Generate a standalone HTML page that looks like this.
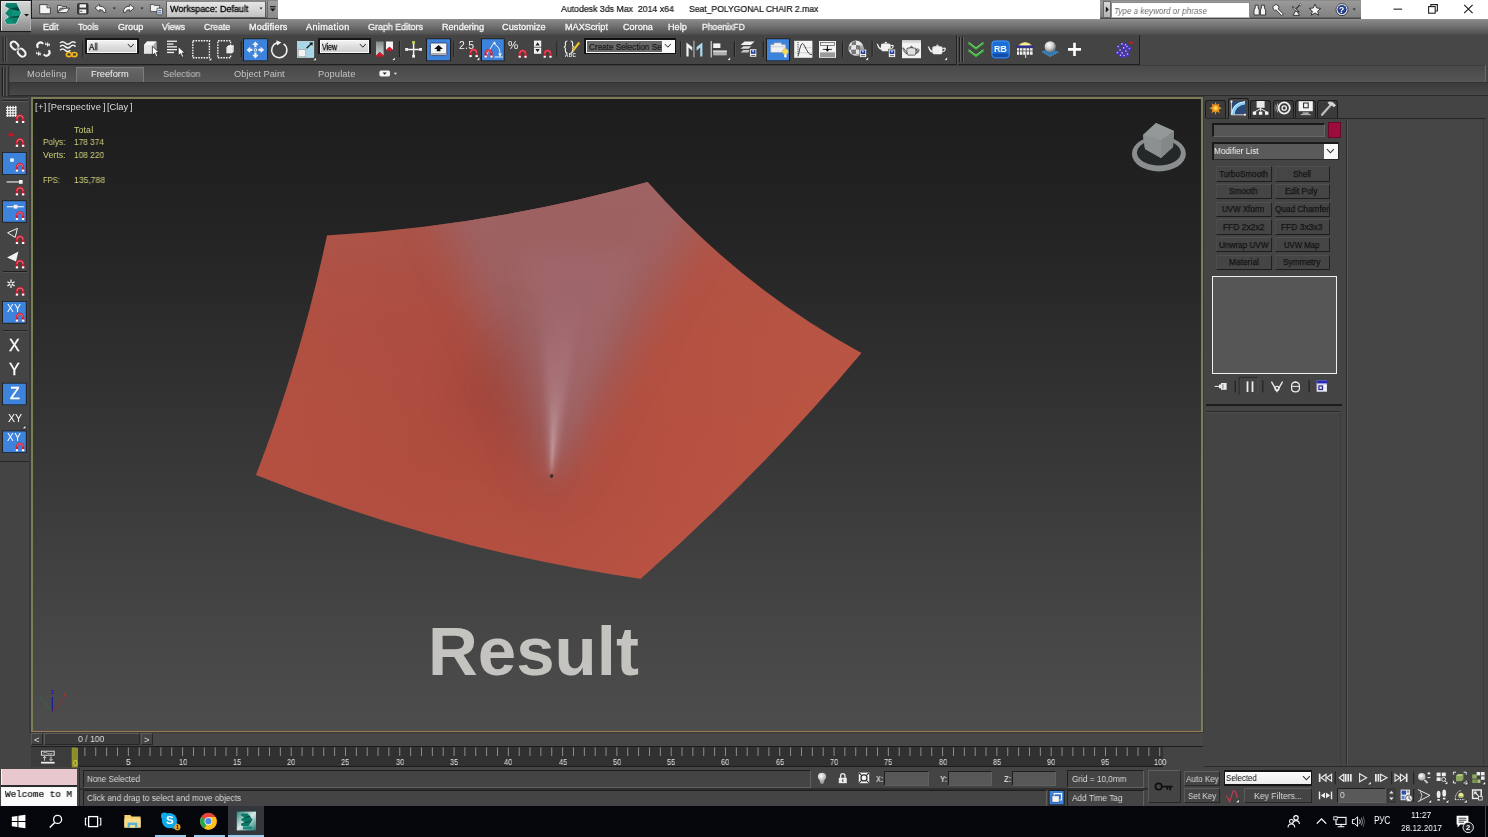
<!DOCTYPE html>
<html>
<head>
<meta charset="utf-8">
<title>Autodesk 3ds Max 2014 x64 - Seat_POLYGONAL CHAIR 2.max</title>
<style>
*{box-sizing:border-box;margin:0;padding:0}
html,body{width:1488px;height:837px;overflow:hidden;background:#444444}
body{position:relative;font-family:"Liberation Sans",sans-serif;font-size:9.5px;color:#e0e0e0;-webkit-font-smoothing:antialiased}
.abs{position:absolute}
svg{position:absolute;overflow:visible}
.t{position:absolute;white-space:nowrap;line-height:1;will-change:transform}
/* SECTION:CSS */
</style>
</head>
<body>
<!-- SECTION:TITLEBAR -->
<div class="abs" style="left:0px;top:0px;width:1488px;height:19px;background:#ffffff"></div>
<div class="abs" style="left:31px;top:0px;width:247px;height:19px;background:linear-gradient(#6a6a6a 0,#a2a2a2 1px,#979797 2px,#8a8a8a 9px,#7d7d7d 17px,#3c3c3c 18px,#3c3c3c 19px)"></div>
<div class="abs" style="left:0px;top:0px;width:32px;height:32px;background:#1c1c1c"></div>
<div class="abs" style="left:1px;top:1px;width:30px;height:30px;background:linear-gradient(#d4d4d4,#c0c0c0 40%,#a0a0a0 75%,#8c8c8c);border:1px solid #e8e8e8;border-right-color:#b0b0b0;border-bottom-color:#888"></div>
<svg style="left:0px;top:0px" width="32" height="32" viewBox="0 0 32 32">
<path d="M6.5 3.3 L16.3 3.3 L20.8 12.8 L15.9 23.4 L6.7 23.4 L5.1 19.9 L9.3 17.1 L5.3 13.2 L9.4 8.8 L5.1 6.1Z" fill="none" stroke="#d4f4ec" stroke-width="1.6" stroke-linejoin="round" opacity="0.8"/>
<path d="M6.5 3.3 L16.3 3.3 L20.8 12.8 L15.9 23.4 L6.7 23.4 L5.1 19.9 L9.3 17.1 L5.3 13.2 L9.4 8.8 L5.1 6.1Z" fill="#0f8a74"/>
<path d="M6.5 3.3 L16.3 3.3 L19.4 9.8 L9.4 8.8 L5.1 6.1Z" fill="#0b7a66"/>
<path d="M6.5 3.3 L16.3 3.3 L17.4 5.6 L6 5.4Z" fill="#0d826e"/>
<path d="M9.4 8.8 L19.4 9.8 L20.8 12.8 L19.4 15.8 L9.3 17.1 L5.3 13.2Z" fill="#11917a"/>
<path d="M12 9 L12 16.8 L9.3 17.1 L5.3 13.2 L9.4 8.8Z" fill="#0d8570"/>
<path d="M9.3 17.1 L19.4 15.8 L15.9 23.4 L6.7 23.4 L5.1 19.9Z" fill="#0c806b"/>
<path d="M6.7 23.4 L5.1 19.9 L7.4 18.4 L12.6 20.4 L12.6 23.4Z" fill="#11917a"/>
<path d="M9.4 8.8 L17.6 7 L19.4 9.8 L18.8 11 Z" fill="#05473d"/>
<path d="M9.3 17.1 L19.4 15.8 L18.6 17.6 L13 17.8Z" fill="#05473d"/>
<path d="M24 14 L29.1 14 L26.55 16.6Z" fill="#161616"/>
</svg>
<svg style="left:0px;top:0px" width="200" height="19" viewBox="0 0 200 19">
<g fill="#f4f4f4" stroke="#3a3a3a" stroke-width="0.9" stroke-linejoin="round">
<path d="M39.7 4.6 L47 4.6 L50.4 7.8 L50.4 13.8 L39.7 13.8Z"/>
<path d="M47 4.6 L47 7.8 L50.4 7.8" fill="#d0d0d0"/>
<path d="M57.6 12.6 L57.6 5.4 L61.3 5.4 L62.3 6.6 L66.5 6.6 L66.5 8.2 L60.2 8.2 L57.6 12.6 L66.6 12.6 L69.6 8.2 L66.5 8.2" />
<rect x="77.6" y="3.6" width="10.4" height="10.4" rx="1" fill="#3c3c3c" stroke="#2a2a2a"/>
</g>
<rect x="79.6" y="4.3" width="6.4" height="3.3" fill="#f2f2f2"/>
<rect x="79.4" y="9.4" width="6.8" height="3.9" fill="#f2f2f2"/>
<rect x="80.3" y="10.8" width="2" height="1" fill="#3c3c3c"/>
<g fill="#f4f4f4" stroke="#3a3a3a" stroke-width="0.9" stroke-linejoin="round">
<path d="M95 8 L99.6 4.2 L99.6 6.3 Q105.8 6 105.9 12.4 L103.6 12.4 Q103.4 9.4 99.6 9.7 L99.6 11.8Z"/>
<path d="M134.3 8 L129.7 4.2 L129.7 6.3 Q123.5 6 123.4 12.4 L125.7 12.4 Q125.9 9.4 129.7 9.7 L129.7 11.8Z"/>
</g>
<path d="M112.8 7.6 L115.8 7.6 L114.3 9.6Z" fill="#2a2a2a"/>
<path d="M140.4 7.6 L143.4 7.6 L141.9 9.6Z" fill="#2a2a2a"/>
<g fill="#f0f0f0" stroke="#3a3a3a" stroke-width="0.8" stroke-linejoin="round">
<path d="M150.4 11.6 L150.4 4.4 L153.6 4.4 L154.4 5.4 L159.6 5.4 L159.6 11.6Z"/>
<rect x="157" y="8.2" width="5.6" height="6.6" rx="0.8"/>
</g>
<rect x="158.2" y="10" width="3.2" height="1.2" fill="#4a6ab0"/>
<rect x="158.2" y="12.2" width="3.2" height="1.2" fill="#4a6ab0"/>
</svg>
<div class="abs" style="left:166px;top:1px;width:100px;height:17px;background:linear-gradient(#e6e6e6,#d2d2d2 60%,#c0c0c0);border:1px solid #5e5e5e;border-top-color:#888"></div>
<div class="t" style="left:170.0px;top:4.8px;font-size:9.2px;color:#000;transform:scaleX(0.979);transform-origin:0 0;-webkit-text-stroke:0.3px #000;">Workspace: Default</div>
<svg style="left:257px;top:6px" width="8" height="6" viewBox="0 0 8 6"><path d="M2.6 1.6 L5.4 1.6 L4 3.6Z" fill="#222"/></svg>
<div class="abs" style="left:267px;top:1px;width:11px;height:17px;background:linear-gradient(#a0a0a0,#8a8a8a);border-left:1px solid #6a6a6a"></div>
<svg style="left:267px;top:1px" width="11" height="17" viewBox="0 0 11 17"><rect x="3" y="5.2" width="5.6" height="1.1" fill="#111"/><path d="M3 7.4 L8.6 7.4 L5.8 10.6Z" fill="#111"/></svg>
<div class="t" style="left:561.3px;top:4.7px;font-size:9.2px;color:#111;transform:scaleX(0.952);transform-origin:0 0;-webkit-text-stroke:0.2px #111;">Autodesk 3ds Max &nbsp;2014 x64</div>
<div class="t" style="left:688.5px;top:4.7px;font-size:9.2px;color:#111;transform:scaleX(0.935);transform-origin:0 0;-webkit-text-stroke:0.2px #111;">Seat_POLYGONAL CHAIR 2.max</div>
<div class="abs" style="left:1100px;top:0px;width:261px;height:19px;background:linear-gradient(#7c7c7c 0,#9a9a9a 1px,#8e8e8e 9px,#828282 17px,#4a4a4a 18px)"></div>
<div class="abs" style="left:1103px;top:1px;width:8px;height:17px;background:linear-gradient(#d8d8d8,#b4b4b4);border:1px solid #6a6a6a"></div>
<svg style="left:1103px;top:1px" width="8" height="17" viewBox="0 0 8 17"><path d="M2.8 5.4 L5.8 8.5 L2.8 11.6Z" fill="#111"/></svg>
<div class="abs" style="left:1111px;top:2px;width:139px;height:16px;background:#fff;border:1px solid #8a8a8a;border-bottom-color:#b0b0b0"></div>
<div class="t" style="left:1113.8px;top:6.1px;font-size:9.4px;color:#6c6c6c;transform:scaleX(0.863);transform-origin:0 0;font-style:italic;">Type a keyword or phrase</div>
<svg style="left:0px;top:0px" width="1488" height="19" viewBox="0 0 1488 19">
<g fill="#f6f6f6" stroke="#2c2c2c" stroke-width="0.9" stroke-linejoin="round">
<path d="M1254 15 L1254 10 L1255.2 8 L1255.2 5.2 L1258.2 5.2 L1258.2 8 L1259.2 10 L1259.2 15Z"/>
<path d="M1260.4 15 L1260.4 10 L1261.4 8 L1261.4 5.2 L1264.4 5.2 L1264.4 8 L1265.6 10 L1265.6 15Z"/>
<path d="M1273.6 5.6 Q1276 3.4 1278.4 5.6 Q1279.6 7.4 1278.2 9 L1283.4 14 L1281.6 15.6 L1276.4 10.2 Q1274.4 10.8 1273.2 9 Q1272.4 7.2 1273.6 5.6Z"/>
<path d="M1292.4 6.4 Q1293.4 11.4 1299.4 11.8 Z"/>
<path d="M1293.2 15.4 L1295.4 11.2 L1297.2 11.6 L1299.4 15.4Z"/>
<path d="M1296.2 8.6 L1300 4.8" fill="none" stroke-width="1.2"/>
<path d="M1315 4.2 L1316.7 8 L1320.8 8.4 L1317.7 11.1 L1318.6 15.2 L1315 13 L1311.4 15.2 L1312.3 11.1 L1309.2 8.4 L1313.3 8Z"/>
</g>
<circle cx="1300.3" cy="4.6" r="1" fill="#f6f6f6" stroke="#2c2c2c" stroke-width="0.6"/>
<circle cx="1342" cy="9.6" r="6" fill="#f4f4f4" stroke="#333" stroke-width="0.9"/>
<circle cx="1342" cy="9.6" r="4.6" fill="#24408e"/>
<path d="M1352.6 8.6 L1355.6 8.6 L1354.1 10.4Z" fill="#222"/>
</svg>
<div class="t" style="left:1339.4px;top:5.6px;font-size:8.5px;color:#fff;font-weight:bold;">?</div>
<svg style="left:0px;top:0px" width="1488" height="19" viewBox="0 0 1488 19">
<rect x="1393.5" y="8.6" width="8.6" height="1.1" fill="#222"/>
<rect x="1428.6" y="6.6" width="6.6" height="6.6" fill="none" stroke="#222" stroke-width="1.1"/>
<path d="M1430.8 6.4 L1430.8 4.6 L1437.4 4.6 L1437.4 11 L1435.4 11" fill="none" stroke="#222" stroke-width="1.1"/>
<path d="M1464.2 4.8 L1472.6 13.2 M1472.6 4.8 L1464.2 13.2" stroke="#222" stroke-width="1.2" fill="none"/>
</svg>
<div class="abs" style="left:31px;top:19px;width:1457px;height:16px;background:linear-gradient(#929292 0,#848484 2px,#767676 6px,#646464 10px,#565656 14px,#4a4a4a 16px)"></div>
<div class="abs" style="left:0px;top:32px;width:31px;height:3px;background:#4a4a4a"></div>
<div class="t" style="left:42.6px;top:22.9px;font-size:9.1px;color:#f6f6f6;transform:scaleX(0.982);transform-origin:0 0;-webkit-text-stroke:0.3px #f6f6f6;">Edit</div>
<div class="t" style="left:77.5px;top:22.9px;font-size:9.1px;color:#f6f6f6;transform:scaleX(0.965);transform-origin:0 0;-webkit-text-stroke:0.3px #f6f6f6;">Tools</div>
<div class="t" style="left:117.9px;top:22.9px;font-size:9.1px;color:#f6f6f6;-webkit-text-stroke:0.3px #f6f6f6;">Group</div>
<div class="t" style="left:161.9px;top:22.9px;font-size:9.1px;color:#f6f6f6;transform:scaleX(0.958);transform-origin:0 0;-webkit-text-stroke:0.3px #f6f6f6;">Views</div>
<div class="t" style="left:203.9px;top:22.9px;font-size:9.1px;color:#f6f6f6;transform:scaleX(0.956);transform-origin:0 0;-webkit-text-stroke:0.3px #f6f6f6;">Create</div>
<div class="t" style="left:248.8px;top:22.9px;font-size:9.1px;color:#f6f6f6;letter-spacing:0.19px;-webkit-text-stroke:0.3px #f6f6f6;">Modifiers</div>
<div class="t" style="left:306.2px;top:22.9px;font-size:9.1px;color:#f6f6f6;letter-spacing:0.35px;-webkit-text-stroke:0.3px #f6f6f6;">Animation</div>
<div class="t" style="left:368.2px;top:22.9px;font-size:9.1px;color:#f6f6f6;transform:scaleX(0.981);transform-origin:0 0;-webkit-text-stroke:0.3px #f6f6f6;">Graph Editors</div>
<div class="t" style="left:441.6px;top:22.9px;font-size:9.1px;color:#f6f6f6;-webkit-text-stroke:0.3px #f6f6f6;">Rendering</div>
<div class="t" style="left:502.3px;top:22.9px;font-size:9.1px;color:#f6f6f6;letter-spacing:0.09px;-webkit-text-stroke:0.3px #f6f6f6;">Customize</div>
<div class="t" style="left:564.5px;top:22.9px;font-size:9.1px;color:#f6f6f6;-webkit-text-stroke:0.3px #f6f6f6;">MAXScript</div>
<div class="t" style="left:622.5px;top:22.9px;font-size:9.1px;color:#f6f6f6;-webkit-text-stroke:0.3px #f6f6f6;">Corona</div>
<div class="t" style="left:667.6px;top:22.9px;font-size:9.1px;color:#f6f6f6;letter-spacing:0.03px;-webkit-text-stroke:0.3px #f6f6f6;">Help</div>
<div class="t" style="left:701.6px;top:22.9px;font-size:9.1px;color:#f6f6f6;transform:scaleX(0.951);transform-origin:0 0;-webkit-text-stroke:0.3px #f6f6f6;">PhoenixFD</div>
<!-- END:TITLEBAR -->
<!-- SECTION:MENUBAR -->
<!-- SECTION:MAINTOOLBAR -->
<div class="abs" style="left:0px;top:35px;width:1140px;height:30px;background:#444444;border-bottom:1px solid #1f1f1f;border-right:1px solid #1f1f1f"></div>
<div class="abs" style="left:1140px;top:35px;width:348px;height:30px;background:#474747"></div>
<div class="abs" style="left:956px;top:35px;width:1px;height:30px;background:#222"></div>
<div class="abs" style="left:957px;top:35px;width:1px;height:30px;background:#585858"></div>
<svg style="left:0px;top:35px" width="1140" height="30" viewBox="0 35 1140 30"><rect x="2.6" y="37" width="1.2" height="25" fill="#1e1e1e"/><rect x="3.8" y="37" width="0.8" height="25" fill="#6a6a6a"/><rect x="5.2" y="37" width="1.2" height="25" fill="#1e1e1e"/><rect x="6.4" y="37" width="0.8" height="25" fill="#6a6a6a"/><rect x="959" y="37" width="1.2" height="25" fill="#1e1e1e"/><rect x="960.2" y="37" width="0.8" height="25" fill="#6a6a6a"/><rect x="961.8" y="37" width="1.2" height="25" fill="#1e1e1e"/><rect x="963" y="37" width="0.8" height="25" fill="#6a6a6a"/><g fill="none" stroke="#f2f2f2" stroke-width="2.3"><rect x="-3.2" y="-4.6" width="6.4" height="9.2" rx="3.2" transform="translate(14.6 45.6) rotate(-42)"/><rect x="-3.2" y="-4.6" width="6.4" height="9.2" rx="3.2" transform="translate(21.6 52.6) rotate(-42)"/></g><g fill="none" stroke="#333" stroke-width="0.6"><rect x="-4.5" y="-5.9" width="9" height="11.8" rx="4.4" transform="translate(14.6 45.6) rotate(-42)"/><rect x="-4.5" y="-5.9" width="9" height="11.8" rx="4.4" transform="translate(21.6 52.6) rotate(-42)"/></g><g fill="none" stroke="#f2f2f2" stroke-width="2.2" stroke-linecap="round"><path d="M37.6 47 A3.2 3.2 0 0 1 42.6 43.2"/><path d="M49.2 51 A3.2 3.2 0 0 1 44.4 55"/></g><g fill="#f2f2f2"><path d="M45.2 42.2l1.6 1.8l1-2.2l0.9 2.6l1.4-1.2l-0.6 3.4l-1.2-1.4l-0.8 1.8l-1-2.6l-1.4 0.8z"/><path d="M36.2 51.4l1.6 1.8l1-2.2l0.9 2.6l1.4-1.2l-0.6 3.4l-1.2-1.4l-0.8 1.8l-1-2.6l-1.4 0.8z"/></g><g fill="none" stroke="#f2f2f2" stroke-width="1.5"><path d="M60 43 Q62.6 40.4 65.2 43 T70.4 43 T75.6 43"/><path d="M60 46.6 Q62.6 44 65.2 46.6 T70.4 46.6 T75.6 46.6"/><path d="M60 50.2 Q62.6 47.6 65.2 50.2 T70.4 50.2"/></g><g fill="none" stroke="#f0b41e" stroke-width="1.7"><ellipse cx="69" cy="54.6" rx="2.6" ry="2.1"/><ellipse cx="74.4" cy="54.6" rx="2.6" ry="2.1"/></g><rect x="82.2" y="41" width="1.2" height="16" fill="#222"/><rect x="83.39999999999999" y="41" width="0.8" height="16" fill="#555"/><path d="M144 45 L147 41.4 L156.4 41.4 L156.4 50.6 L153.4 53.6 L144 53.6Z" fill="#dcdcdc"/><path d="M144 45 L147 41.4 L156.4 41.4 L153.4 45Z" fill="#f6f6f6"/><path d="M153.4 45 L156.4 41.4 L156.4 50.6 L153.4 53.6Z" fill="#a8a8a8"/><rect x="144" y="45" width="9.4" height="8.6" fill="#e4e4e4"/><path transform="translate(152.4 46.2) scale(1.05)" d="M0 0 L0 8.6 L2.1 6.7 L3.7 10.2 L5.3 9.5 L3.7 6.1 L6.4 6.1Z" fill="#fff" stroke="#1a1a1a" stroke-width="0.7"/><g fill="#f2f2f2"><rect x="167" y="40.6" width="10" height="1.3"/><rect x="167" y="43.4" width="6.4" height="1.3"/><rect x="167" y="46.2" width="10" height="1.3"/><rect x="167" y="49" width="10" height="1.3"/><rect x="167" y="51.8" width="7" height="1.3"/></g><path transform="translate(178.2 46.6) scale(1.05)" d="M0 0 L0 8.6 L2.1 6.7 L3.7 10.2 L5.3 9.5 L3.7 6.1 L6.4 6.1Z" fill="#fff" stroke="#1a1a1a" stroke-width="0.7"/><rect x="192.8" y="40.8" width="16.6" height="17" fill="none" stroke="#f2f2f2" stroke-width="1.4" stroke-dasharray="1.6 1.1"/><path d="M208.0 60.800000000000004 L211.79999999999998 57.0 L211.79999999999998 60.800000000000004Z" fill="#f8f8f8" stroke="#161616" stroke-width="0.6"/><path d="M230.6 46 L230.6 40.8 L217.8 40.8 L217.8 57.8 L230.6 57.8 L230.6 54.4" fill="none" stroke="#f2f2f2" stroke-width="1.4" stroke-dasharray="1.6 1.1"/><path d="M226.6 47.4 L228.2 45.6 L233.8 45.6 L233.8 51.4 L232.2 53.2 L226.6 53.2Z" fill="#d8d8d8"/><path d="M226.6 47.4 L228.2 45.6 L233.8 45.6 L232.2 47.4Z" fill="#f8f8f8"/><rect x="226.6" y="47.4" width="5.6" height="5.8" fill="#e8e8e8"/><rect x="240.70000000000002" y="41" width="1.2" height="16" fill="#222"/><rect x="241.9" y="41" width="0.8" height="16" fill="#555"/><rect x="243" y="38.4" width="24.6" height="22.8" fill="#1a1a1a"/><rect x="244" y="39.2" width="23" height="21.2" fill="#3d83db"/><g fill="#f2f2f2"><path d="M255.4 41.4 L258.6 45 L256.5 45 L256.5 47.2 L254.3 47.2 L254.3 45 L252.2 45Z"/><path d="M255.4 58.4 L258.6 54.8 L256.5 54.8 L256.5 52.6 L254.3 52.6 L254.3 54.8 L252.2 54.8Z"/><path d="M246.6 49.9 L250.2 46.7 L250.2 48.8 L252.4 48.8 L252.4 51 L250.2 51 L250.2 53.1Z"/><path d="M264.2 49.9 L260.6 46.7 L260.6 48.8 L258.4 48.8 L258.4 51 L260.6 51 L260.6 53.1Z"/><circle cx="255.4" cy="49.9" r="1.7"/></g><circle cx="255.4" cy="49.9" r="0.8" fill="#3d83db"/><path d="M283.6 43.8 A7.6 7.6 0 1 1 277 42.8" fill="none" stroke="#f2f2f2" stroke-width="1.5"/><path d="M276.4 40.2 L281.4 42.6 L277 45.6Z" fill="#f2f2f2"/><rect x="297.4" y="41.4" width="16.4" height="16" fill="#a8d8e8"/><rect x="297.4" y="41.4" width="16.4" height="16" fill="none" stroke="#d8f0f8" stroke-width="0.6"/><rect x="298.2" y="49.6" width="7.6" height="7.2" fill="#f4f4f4" stroke="#888" stroke-width="0.5"/><path d="M306.6 48.2 L311.6 43.4" stroke="#111" stroke-width="1.3"/><path d="M312.8 42.2 L312.4 45.8 L309.2 42.8Z" fill="#111"/><path d="M312.59999999999997 60.800000000000004 L316.4 57.0 L316.4 60.800000000000004Z" fill="#f8f8f8" stroke="#161616" stroke-width="0.6"/><defs><linearGradient id="pvg" x1="0" y1="0" x2="0" y2="1"><stop offset="0" stop-color="#8a8a8a"/><stop offset="1" stop-color="#c8d8d8"/></linearGradient></defs><path d="M376 41.6 L383.6 41.6 L383.6 55.4 L379.8 52 L376 55.4Z" fill="url(#pvg)"/><path d="M376 55.6 L379.8 52 L383.6 55.6 L381.4 57.6 L379.8 56 L378.2 57.6Z" fill="#d01828"/><path d="M386 41.6 L393 41.6 L393 50 L389.5 46.8 L386 50Z" fill="#f4f4f4"/><path d="M386 50 L389.5 46.8 L393 50 L391 51.6 L389.5 50.2 L388 51.6Z" fill="#d01828"/><path d="M391.4 60.6 L395.2 56.8 L395.2 60.6Z" fill="#f8f8f8" stroke="#161616" stroke-width="0.6"/><rect x="398.79999999999995" y="41" width="1.2" height="16" fill="#222"/><rect x="400.0" y="41" width="0.8" height="16" fill="#555"/><path d="M407 49.4 L420.6 49.4 M413.6 43 L413.6 55.6" stroke="#f2f2f2" stroke-width="1.5"/><rect x="412.2" y="41" width="2.8" height="2.8" fill="#b8d850"/><rect x="405.2" y="48" width="2.8" height="2.8" fill="#f2f2f2"/><rect x="419.2" y="48" width="2.8" height="2.8" fill="#f2f2f2"/><rect x="412.2" y="54.8" width="2.8" height="2.8" fill="#f2f2f2"/><rect x="426" y="38.4" width="25" height="22.8" fill="#1a1a1a"/><rect x="427" y="39.2" width="23" height="21.2" fill="#3d83db"/><rect x="430.4" y="43" width="16.4" height="12.6" rx="1.2" fill="#f4f4f4" stroke="#2a3a6a" stroke-width="0.8"/><rect x="431.2" y="53" width="14.8" height="2" fill="#b0b0b0"/><path d="M438.6 45 L443 49 L440.4 49 L440.4 51.2 L436.8 51.2 L436.8 49 L434.2 49Z" fill="#111"/><rect x="453.2" y="41" width="1.2" height="16" fill="#222"/><rect x="454.40000000000003" y="41" width="0.8" height="16" fill="#555"/><g transform="translate(469.4 48.6) scale(1.05)"><path d="M1.1 8 L1.1 3.8 A2.9 2.9 0 0 1 6.9 3.8 L6.9 8" fill="none" stroke="#d4182c" stroke-width="2.2"/><path d="M1.1 3.9 A2.9 2.9 0 0 1 6.9 3.9" fill="none" stroke="#f08a94" stroke-width="0.7"/><rect x="0" y="6.2" width="2.2" height="1.9" fill="#fff"/><rect x="5.8" y="6.2" width="2.2" height="1.9" fill="#fff"/></g><path d="M476.0 60.400000000000006 L479.8 56.6 L479.8 60.400000000000006Z" fill="#f8f8f8" stroke="#161616" stroke-width="0.6"/><rect x="481" y="38.4" width="23.6" height="22.8" fill="#1a1a1a"/><rect x="482" y="39.2" width="21.8" height="21.2" fill="#3d83db"/><path d="M486 55.6 L494.6 41.6 M494.6 57 L503 57" stroke="#f2f2f2" stroke-width="1" fill="none"/><path d="M494.6 44.4 Q500.4 47 500 55" stroke="#f2f2f2" stroke-width="1" fill="none"/><path d="M498.2 53.6 L501.8 53.6 L500 57Z" fill="#f2f2f2"/><circle cx="494.8" cy="43.2" r="1" fill="#f2f2f2"/><g transform="translate(484.6 49.4) scale(1.0)"><path d="M1.1 8 L1.1 3.8 A2.9 2.9 0 0 1 6.9 3.8 L6.9 8" fill="none" stroke="#d4182c" stroke-width="2.2"/><path d="M1.1 3.9 A2.9 2.9 0 0 1 6.9 3.9" fill="none" stroke="#f08a94" stroke-width="0.7"/><rect x="0" y="6.2" width="2.2" height="1.9" fill="#fff"/><rect x="5.8" y="6.2" width="2.2" height="1.9" fill="#fff"/></g><g transform="translate(518.6 49.6) scale(1.0)"><path d="M1.1 8 L1.1 3.8 A2.9 2.9 0 0 1 6.9 3.8 L6.9 8" fill="none" stroke="#d4182c" stroke-width="2.2"/><path d="M1.1 3.9 A2.9 2.9 0 0 1 6.9 3.9" fill="none" stroke="#f08a94" stroke-width="0.7"/><rect x="0" y="6.2" width="2.2" height="1.9" fill="#fff"/><rect x="5.8" y="6.2" width="2.2" height="1.9" fill="#fff"/></g><rect x="534" y="40.6" width="7.2" height="6.2" fill="#f2f2f2"/><rect x="534" y="47.6" width="7.2" height="6.2" fill="#f2f2f2"/><path d="M535.4 45.4 L539.8 45.4 L537.6 42.2Z" fill="#222"/><path d="M535.4 49 L539.8 49 L537.6 52.2Z" fill="#222"/><g transform="translate(543.6 49.6) scale(1.0)"><path d="M1.1 8 L1.1 3.8 A2.9 2.9 0 0 1 6.9 3.8 L6.9 8" fill="none" stroke="#d4182c" stroke-width="2.2"/><path d="M1.1 3.9 A2.9 2.9 0 0 1 6.9 3.9" fill="none" stroke="#f08a94" stroke-width="0.7"/><rect x="0" y="6.2" width="2.2" height="1.9" fill="#fff"/><rect x="5.8" y="6.2" width="2.2" height="1.9" fill="#fff"/></g><rect x="556.4" y="41" width="1.2" height="16" fill="#222"/><rect x="557.6" y="41" width="0.8" height="16" fill="#555"/><path d="M567.4 41 Q565.4 41 565.4 43 L565.4 45.4 Q565.4 46.8 563.8 47 Q565.4 47.2 565.4 48.6 L565.4 51 Q565.4 53 567.4 53" fill="none" stroke="#f2f2f2" stroke-width="1.1"/><path d="M570.6 41 Q572.6 41 572.6 43 L572.6 45.4 Q572.6 46.8 574.2 47 Q572.6 47.2 572.6 48.6 L572.6 51 Q572.6 53 570.6 53" fill="none" stroke="#f2f2f2" stroke-width="1.1"/><path d="M572.2 49.8 L578.4 41.8 L580.2 43.2 L574 51.2 L571.6 52Z" fill="#f0c838" stroke="#6a5a10" stroke-width="0.4"/><path d="M572.2 49.8 L574 51.2 L571.6 52Z" fill="#f4f4f4"/><rect x="680.0" y="41" width="1.2" height="16" fill="#222"/><rect x="681.2" y="41" width="0.8" height="16" fill="#555"/><path d="M686.4 42.4 L686.4 56.6 L688.6 56.6 L688.6 47.4 L692.2 50.8 L692.2 47 Z" fill="#f2f2f2"/><rect x="693.4" y="40.8" width="1.1" height="16.6" fill="#b8b8b8"/><path d="M702.4 42.4 L702.4 56.6 L700.2 56.6 L700.2 47.4 L696.6 50.8 L696.6 47 Z" fill="#a8dcf0"/><rect x="710.6" y="41" width="1.3" height="16.4" fill="#c8c8c8"/><rect x="713.2" y="43.4" width="7.2" height="4.6" fill="#f2f2f2"/><rect x="713.2" y="50.6" width="13.6" height="4.8" fill="#b0b0b0"/><rect x="713.2" y="50.6" width="13.6" height="1.4" fill="#dcdcdc"/><path d="M726.8 60.400000000000006 L730.6 56.6 L730.6 60.400000000000006Z" fill="#f8f8f8" stroke="#161616" stroke-width="0.6"/><rect x="733.8" y="41" width="1.2" height="16" fill="#222"/><rect x="735.0" y="41" width="0.8" height="16" fill="#555"/><g fill="#f2f2f2"><path d="M740.6 45 L744.4 41.4 L754.6 41.4 L750.8 45Z"/><path d="M740.6 48.8 L743.4 46.2 L751.4 46.2 L748.6 48.8Z" fill="#dcdcdc"/><path d="M740.6 52.6 L743.4 50 L750 50 L748.2 52.6Z" fill="#c8c8c8"/></g><rect x="749.8" y="49" width="6.8" height="8" fill="#f4f4f4" stroke="#3a3a3a" stroke-width="0.5"/><rect x="750.9" y="50.2" width="4.6" height="3.6" fill="#1e3ea0"/><rect x="752.4" y="50.2" width="1.4" height="2" fill="#dfe6ff"/><rect x="751.1999999999999" y="55" width="4" height="0.9" fill="#555"/><rect x="762.6999999999999" y="41" width="1.2" height="16" fill="#222"/><rect x="763.9" y="41" width="0.8" height="16" fill="#555"/><rect x="766" y="38.4" width="24" height="22.8" fill="#1a1a1a"/><rect x="767" y="39.2" width="22" height="21.2" fill="#3d83db"/><path d="M770.6 44.4 L774 44.4 L774 42.8 L781.6 42.8 L781.6 44.4 L785.6 44.4 L785.6 52.6 L770.6 52.6Z" fill="#f0f0f0" stroke="#7a8aa8" stroke-width="0.5"/><rect x="770.6" y="46.2" width="15" height="1" fill="#c8ccd8"/><circle cx="785.4" cy="51.6" r="2.9" fill="#f4dc5a" stroke="#c8a830" stroke-width="0.5"/><rect x="784.2" y="54.2" width="2.4" height="3.2" fill="#f4f4f4"/><rect x="794.2" y="40.8" width="18.2" height="17" fill="#f2f2f2"/><path d="M798 42 L798 57" stroke="#333" stroke-width="0.9" stroke-dasharray="1.2 1"/><path d="M794.6 52.8 L812 52.8 M803 47.6 L812 47.6" stroke="#bbb" stroke-width="0.6"/><path d="M798.4 55.4 Q801 40 803.8 44.6 Q806.6 50 808.4 53 Q810 55 812 54.6" fill="none" stroke="#333" stroke-width="0.9"/><rect x="819" y="41" width="17" height="16.8" fill="#f2f2f2"/><rect x="820.6" y="42.6" width="13.8" height="3" fill="none" stroke="#555" stroke-width="0.7"/><rect x="820" y="52.4" width="15" height="4.6" fill="#9a9a9a"/><path d="M827.4 45.6 L827.4 49.6" stroke="#111" stroke-width="1"/><path d="M825 49 L829.8 49 L827.4 51.8Z" fill="#111"/><path d="M822.8 49.4 L832 49.4" stroke="#111" stroke-width="0.8"/><rect x="842.0" y="41" width="1.2" height="16" fill="#222"/><rect x="843.2" y="41" width="0.8" height="16" fill="#555"/><circle cx="856" cy="48.2" r="7.6" fill="#e8e8e8"/><g fill="#7a7a7a"><path d="M852 41.8 L856 41 L856 45 L851.6 45.4Z"/><path d="M856 45 L860.4 45.4 L861 49.6 L856 49.4Z"/><path d="M851.6 45.4 L856 45 L856 49.4 L850.6 49.8 Z" fill="#e8e8e8"/><path d="M848.6 46.4 L851.6 45.4 L850.8 49.8 L848.4 50Z"/><path d="M850.8 49.8 L856 49.4 L856 54 L852 54.4Z"/><path d="M860.4 45.4 L862.6 45 L863.4 49 L861 49.6Z" fill="#b0b0b0"/><path d="M856 54 L860 54 L859 55.4 L856 55.8Z" fill="#b0b0b0"/></g><rect x="859.6" y="49.2" width="6.8" height="8" fill="#f4f4f4" stroke="#3a3a3a" stroke-width="0.5"/><rect x="860.7" y="50.400000000000006" width="4.6" height="3.6" fill="#1e3ea0"/><rect x="862.2" y="50.400000000000006" width="1.4" height="2" fill="#dfe6ff"/><rect x="861.0" y="55.2" width="4" height="0.9" fill="#555"/><path d="M864.8 60.400000000000006 L868.6 56.6 L868.6 60.400000000000006Z" fill="#f8f8f8" stroke="#161616" stroke-width="0.6"/><rect x="871.6" y="41" width="1.2" height="16" fill="#222"/><rect x="872.8000000000001" y="41" width="0.8" height="16" fill="#555"/><g transform="translate(885.8 46.2) scale(1.0)" fill="#f0f0f0" stroke="none" stroke-width="0.7"><path d="M-4.6 -2.2 Q-5.6 4.6 -3.4 5 L3.4 5 Q5.6 4.6 4.6 -2.2 Q0 -3.6 -4.6 -2.2Z"/><path d="M-1.4 -3.2 Q0 -5.6 1.4 -3.2Z"/><path d="M-4.8 1.8 Q-7 0.8 -7.8 -2.2 L-9.2 -2.6 L-8.6 -1 Q-7.6 2.8 -4.6 3.6Z"/><path d="M4.8 -1 Q8.4 -2.6 8 0.6 Q7.4 2.8 4.6 3.2 L4.8 2.2 Q6.6 1.8 6.9 0.4 Q7 -0.8 4.8 0Z"/></g><rect x="888.6" y="49.2" width="6.8" height="8" fill="#f4f4f4" stroke="#3a3a3a" stroke-width="0.5"/><rect x="889.7" y="50.400000000000006" width="4.6" height="3.6" fill="#1e3ea0"/><rect x="891.2" y="50.400000000000006" width="1.4" height="2" fill="#dfe6ff"/><rect x="890.0" y="55.2" width="4" height="0.9" fill="#555"/><rect x="902" y="40.4" width="19" height="17.8" fill="#f2f2f2"/><rect x="902" y="40.4" width="19" height="2.6" fill="#d8d8d8"/><g transform="translate(911.4 50.4) scale(0.95)" fill="#e0e0e0" stroke="#222" stroke-width="0.7"><path d="M-4.6 -2.2 Q-5.6 4.6 -3.4 5 L3.4 5 Q5.6 4.6 4.6 -2.2 Q0 -3.6 -4.6 -2.2Z"/><path d="M-1.4 -3.2 Q0 -5.6 1.4 -3.2Z"/><path d="M-4.8 1.8 Q-7 0.8 -7.8 -2.2 L-9.2 -2.6 L-8.6 -1 Q-7.6 2.8 -4.6 3.6Z"/><path d="M4.8 -1 Q8.4 -2.6 8 0.6 Q7.4 2.8 4.6 3.2 L4.8 2.2 Q6.6 1.8 6.9 0.4 Q7 -0.8 4.8 0Z"/></g><g transform="translate(937.4 49) scale(1.05)" fill="#f0f0f0" stroke="none" stroke-width="0.7"><path d="M-4.6 -2.2 Q-5.6 4.6 -3.4 5 L3.4 5 Q5.6 4.6 4.6 -2.2 Q0 -3.6 -4.6 -2.2Z"/><path d="M-1.4 -3.2 Q0 -5.6 1.4 -3.2Z"/><path d="M-4.8 1.8 Q-7 0.8 -7.8 -2.2 L-9.2 -2.6 L-8.6 -1 Q-7.6 2.8 -4.6 3.6Z"/><path d="M4.8 -1 Q8.4 -2.6 8 0.6 Q7.4 2.8 4.6 3.2 L4.8 2.2 Q6.6 1.8 6.9 0.4 Q7 -0.8 4.8 0Z"/></g><path d="M943.8 60.400000000000006 L947.6 56.6 L947.6 60.400000000000006Z" fill="#f8f8f8" stroke="#161616" stroke-width="0.6"/><g fill="none" stroke="#3cb43c" stroke-width="2.1" stroke-linejoin="miter"><path d="M968.6 43 L976 48.6 L983.4 43"/><path d="M968.6 50.4 L976 56 L983.4 50.4"/></g><g fill="none" stroke="#8ae08a" stroke-width="0.7"><path d="M968.6 42.2 L976 47.8 L983.4 42.2"/><path d="M968.6 49.6 L976 55.2 L983.4 49.6"/></g><rect x="991.4" y="40.4" width="18.4" height="18" rx="3.6" fill="#1c6ed8"/><rect x="991.4" y="53.6" width="18.4" height="4.8" rx="2.4" fill="#124ea8"/><rect x="992" y="41" width="17.2" height="16.8" rx="3.2" fill="none" stroke="#5aa0f0" stroke-width="0.7"/><path d="M1018 45.6 Q1025 38.6 1032.4 45.6Z" fill="#e8e070"/><path d="M1019.6 45.6 Q1025 41.6 1030.6 45.6Z" fill="#f8f4b8"/><rect x="1016.4" y="45.6" width="17.6" height="2" fill="#2c2ca0"/><g fill="#f0f0f0"><rect x="1017" y="48.2" width="2" height="6.6"/><rect x="1019.8" y="48.2" width="2.6" height="6.6"/><rect x="1023.2" y="48.2" width="2.6" height="6.6"/><rect x="1026.6" y="48.2" width="2.6" height="6.6"/><rect x="1030" y="48.2" width="2.6" height="6.6"/></g><rect x="1016.4" y="50.6" width="17.6" height="0.8" fill="#444"/><rect x="1025" y="55" width="1.2" height="3" fill="#c8c8c8"/><defs><radialGradient id="sph" cx="0.4" cy="0.32" r="0.7"><stop offset="0" stop-color="#ffffff"/><stop offset="0.5" stop-color="#d0d0d0"/><stop offset="1" stop-color="#6a6a6a"/></radialGradient></defs><path d="M1042 51.6 L1050 56.6 L1058.6 52 L1053 49 L1047 49Z" fill="#2e7ab8"/><path d="M1042 51.6 L1050 56.6 L1058.6 52" fill="none" stroke="#6ab4e8" stroke-width="0.8" stroke-dasharray="1.5 1"/><circle cx="1050.2" cy="46.8" r="5.6" fill="url(#sph)"/><path d="M1068 49.4 L1081 49.4 M1074.5 42.8 L1074.5 56" stroke="#fff" stroke-width="2.6"/><circle cx="1118.6" cy="47" r="1.9" fill="#4a32c8"/><circle cx="1118.1" cy="46.5" r="0.8" fill="#c8c0ff"/><circle cx="1122.4" cy="44.4" r="1.9" fill="#4a32c8"/><circle cx="1121.9" cy="43.9" r="0.8" fill="#c8c0ff"/><circle cx="1126" cy="45.2" r="1.9" fill="#4a32c8"/><circle cx="1125.5" cy="44.7" r="0.8" fill="#c8c0ff"/><circle cx="1124.2" cy="48.4" r="1.9" fill="#4a32c8"/><circle cx="1123.7" cy="47.9" r="0.8" fill="#c8c0ff"/><circle cx="1120.6" cy="50.6" r="1.9" fill="#4a32c8"/><circle cx="1120.1" cy="50.1" r="0.8" fill="#c8c0ff"/><circle cx="1117.8" cy="53" r="1.9" fill="#4a32c8"/><circle cx="1117.3" cy="52.5" r="0.8" fill="#c8c0ff"/><circle cx="1122.6" cy="53.4" r="1.9" fill="#4a32c8"/><circle cx="1122.1" cy="52.9" r="0.8" fill="#c8c0ff"/><circle cx="1126.4" cy="51.6" r="1.9" fill="#4a32c8"/><circle cx="1125.9" cy="51.1" r="0.8" fill="#c8c0ff"/><circle cx="1129.6" cy="49" r="1.9" fill="#4a32c8"/><circle cx="1129.1" cy="48.5" r="0.8" fill="#c8c0ff"/><circle cx="1128" cy="54.6" r="1.9" fill="#4a32c8"/><circle cx="1127.5" cy="54.1" r="0.8" fill="#c8c0ff"/><circle cx="1124.6" cy="56" r="1.9" fill="#4a32c8"/><circle cx="1124.1" cy="55.5" r="0.8" fill="#c8c0ff"/><circle cx="1121" cy="55.8" r="1.9" fill="#4a32c8"/><circle cx="1120.5" cy="55.3" r="0.8" fill="#c8c0ff"/><circle cx="1127.4" cy="47" r="1.9" fill="#4a32c8"/><circle cx="1126.9" cy="46.5" r="0.8" fill="#c8c0ff"/><circle cx="1131.4" cy="42.8" r="1.4" fill="#e01818"/></svg>
<div class="t" style="left:458.8px;top:40.7px;font-size:10.4px;color:#f4f4f4;letter-spacing:0.27px;">2.5</div>
<div class="t" style="left:508.4px;top:39.8px;font-size:11.5px;color:#f4f4f4;">%</div>
<div class="t" style="left:564.6px;top:54.3px;font-size:4.6px;color:#f4f4f4;letter-spacing:0.42px;font-weight:bold;">ABC</div>
<div class="t" style="left:994.4px;top:44.3px;font-size:9.6px;color:#ffffff;transform:scaleX(0.923);transform-origin:0 0;font-weight:bold;">RB</div>
<div class="abs" style="left:85px;top:38px;width:53.8px;height:16.4px;background:#161616"></div><div class="abs" style="left:86.6px;top:39.6px;width:50.599999999999994px;height:13.2px;background:linear-gradient(#f2f2f2,#dedede 50%,#cfcfcf);border:1px solid #fafafa"></div><div class="t" style="left:88.6px;top:41.7px;font-size:9.6px;color:#0a0a0a;transform:scaleX(0.825);transform-origin:0 0;-webkit-text-stroke:0.3px #0a0a0a;">All</div><svg style="left:127.4px;top:43.2px" width="8" height="6" viewBox="0 0 8 6"><path d="M0.8 1 L3.8 4.2 L6.8 1" fill="none" stroke="#222" stroke-width="1"/></svg>
<div class="abs" style="left:318px;top:38px;width:52.8px;height:16.4px;background:#161616"></div><div class="abs" style="left:319.6px;top:39.6px;width:49.599999999999994px;height:13.2px;background:linear-gradient(#f2f2f2,#dedede 50%,#cfcfcf);border:1px solid #fafafa"></div><div class="t" style="left:321.6px;top:41.7px;font-size:9.6px;color:#0a0a0a;transform:scaleX(0.727);transform-origin:0 0;-webkit-text-stroke:0.3px #0a0a0a;">View</div><svg style="left:359.40000000000003px;top:43.2px" width="8" height="6" viewBox="0 0 8 6"><path d="M0.8 1 L3.8 4.2 L6.8 1" fill="none" stroke="#222" stroke-width="1"/></svg>
<div class="abs" style="left:584.2px;top:38px;width:92.2px;height:16.4px;background:#101010"></div>
<div class="abs" style="left:585.8px;top:39.6px;width:89px;height:13.2px;background:#fafafa"></div>
<div class="abs" style="left:587px;top:40.8px;width:75.2px;height:10.8px;background:#6a6a6a"></div>
<div class="t" style="left:588.6px;top:41.8px;font-size:9.4px;color:#161616;transform:scaleX(0.871);transform-origin:0 0;-webkit-text-stroke:0.2px #161616;">Create Selection Se</div>
<svg style="left:664.4px;top:43.2px" width="8" height="6" viewBox="0 0 8 6"><path d="M0.8 1 L3.8 4.2 L6.8 1" fill="none" stroke="#222" stroke-width="1"/></svg>
<!-- END:MAINTOOLBAR -->
<!-- SECTION:RIBBON -->
<div class="abs" style="left:0px;top:65px;width:1486px;height:17px;background:linear-gradient(#2e2e2e 0,#4a4a4a 1px,#4c4c4c 30%,#565656 100%);border-right:1px solid #6a6a6a"></div>
<div class="abs" style="left:0px;top:82px;width:1488px;height:14px;background:linear-gradient(#3a3a3a,#404040 40%,#494949);border-top:1px solid #343434;border-bottom:1px solid #2c2c2c"></div>
<div class="abs" style="left:0px;top:65px;width:9px;height:32px;background:#444"></div>
<svg style="left:0px;top:65px" width="10" height="32" viewBox="0 0 10 32"><rect x="1.8" y="2" width="1.2" height="29" fill="#1e1e1e"/><rect x="3" y="2" width="0.8" height="29" fill="#666"/><rect x="4.6" y="2" width="1.2" height="29" fill="#1e1e1e"/><rect x="5.8" y="2" width="0.8" height="29" fill="#666"/><rect x="8.2" y="1" width="1" height="31" fill="#2a2a2a"/></svg>
<div class="abs" style="left:75.6px;top:67.4px;width:68.8px;height:14.6px;background:linear-gradient(#676767,#5a5a5a);border:1px solid #7c7c7c;border-bottom:none;border-radius:1px 1px 0 0"></div>
<div class="t" style="left:27.0px;top:69.9px;font-size:9.3px;color:#c4c4c4;letter-spacing:0.25px;">Modeling</div>
<div class="t" style="left:91.2px;top:69.9px;font-size:9.3px;color:#f4f4f4;">Freeform</div>
<div class="t" style="left:162.5px;top:69.9px;font-size:9.3px;color:#c4c4c4;transform:scaleX(0.980);transform-origin:0 0;">Selection</div>
<div class="t" style="left:234.2px;top:69.9px;font-size:9.3px;color:#c4c4c4;">Object Paint</div>
<div class="t" style="left:318.0px;top:69.9px;font-size:9.3px;color:#c4c4c4;letter-spacing:0.11px;">Populate</div>
<svg style="left:378px;top:69px" width="24" height="10" viewBox="0 0 24 10"><rect x="1.4" y="1.6" width="10.6" height="5.8" rx="1.6" fill="#f4f4f4"/><path d="M4.6 3.4 L8.8 3.4 L6.7 5.8Z" fill="#222"/><path d="M15.8 3.8 L19 3.8 L17.4 5.8Z" fill="#eee"/></svg>
<!-- END:RIBBON -->
<!-- SECTION:LEFTBAR -->
<div class="abs" style="left:0px;top:96px;width:30px;height:366px;background:#444;border-right:1px solid #262626;border-bottom:1px solid #262626"></div>
<svg style="left:0px;top:96px" width="30" height="366" viewBox="0 96 30 366"><rect x="2" y="96.6" width="26" height="1.1" fill="#1e1e1e"/><rect x="2" y="97.7" width="26" height="0.8" fill="#666"/><rect x="2" y="99.8" width="26" height="1.1" fill="#1e1e1e"/><rect x="2" y="100.9" width="26" height="0.8" fill="#666"/><rect x="7.0" y="105.8" width="1.2" height="11" fill="#f2f2f2"/><rect x="6" y="107.0" width="10.6" height="1.2" fill="#f2f2f2"/><rect x="9.7" y="105.8" width="1.2" height="11" fill="#f2f2f2"/><rect x="6" y="109.7" width="10.6" height="1.2" fill="#f2f2f2"/><rect x="12.4" y="105.8" width="1.2" height="11" fill="#f2f2f2"/><rect x="6" y="112.4" width="10.6" height="1.2" fill="#f2f2f2"/><rect x="15.100000000000001" y="105.8" width="1.2" height="11" fill="#f2f2f2"/><rect x="6" y="115.1" width="10.6" height="1.2" fill="#f2f2f2"/><g transform="translate(15.8 114.4) scale(1.06)"><path d="M1.1 8 L1.1 3.8 A2.9 2.9 0 0 1 6.9 3.8 L6.9 8" fill="none" stroke="#d4182c" stroke-width="2.2"/><path d="M1.1 3.9 A2.9 2.9 0 0 1 6.9 3.9" fill="none" stroke="#f08a94" stroke-width="0.7"/><rect x="0" y="6.2" width="2.2" height="1.9" fill="#fff"/><rect x="5.8" y="6.2" width="2.2" height="1.9" fill="#fff"/></g><path d="M11.2 130.6 L12.2 133.8 L15.4 134.8 L12.2 135.8 L11.2 139 L10.2 135.8 L7 134.8 L10.2 133.8Z" fill="#d01020"/><g transform="translate(15.8 138.2) scale(1.06)"><path d="M1.1 8 L1.1 3.8 A2.9 2.9 0 0 1 6.9 3.8 L6.9 8" fill="none" stroke="#d4182c" stroke-width="2.2"/><path d="M1.1 3.9 A2.9 2.9 0 0 1 6.9 3.9" fill="none" stroke="#f08a94" stroke-width="0.7"/><rect x="0" y="6.2" width="2.2" height="1.9" fill="#fff"/><rect x="5.8" y="6.2" width="2.2" height="1.9" fill="#fff"/></g><rect x="2.2" y="152" width="24.4" height="23" fill="#1a1a1a"/><rect x="3" y="152.8" width="22.8" height="21.4" fill="#3d83db"/><rect x="10.2" y="158.4" width="3.6" height="3.4" fill="#f2f2f2"/><g transform="translate(15.8 163) scale(1.06)"><path d="M1.1 8 L1.1 3.8 A2.9 2.9 0 0 1 6.9 3.8 L6.9 8" fill="none" stroke="#d4182c" stroke-width="2.2"/><path d="M1.1 3.9 A2.9 2.9 0 0 1 6.9 3.9" fill="none" stroke="#f08a94" stroke-width="0.7"/><rect x="0" y="6.2" width="2.2" height="1.9" fill="#fff"/><rect x="5.8" y="6.2" width="2.2" height="1.9" fill="#fff"/></g><rect x="6.6" y="181.4" width="13" height="1.1" fill="#f2f2f2"/><rect x="19" y="180" width="3.6" height="3.8" fill="#f2f2f2"/><g transform="translate(15.8 186.8) scale(1.06)"><path d="M1.1 8 L1.1 3.8 A2.9 2.9 0 0 1 6.9 3.8 L6.9 8" fill="none" stroke="#d4182c" stroke-width="2.2"/><path d="M1.1 3.9 A2.9 2.9 0 0 1 6.9 3.9" fill="none" stroke="#f08a94" stroke-width="0.7"/><rect x="0" y="6.2" width="2.2" height="1.9" fill="#fff"/><rect x="5.8" y="6.2" width="2.2" height="1.9" fill="#fff"/></g><rect x="2.2" y="200.4" width="24.4" height="22.2" fill="#1a1a1a"/><rect x="3" y="201.20000000000002" width="22.8" height="20.599999999999998" fill="#3d83db"/><rect x="6.8" y="206.2" width="17" height="1.1" fill="#f2f2f2"/><rect x="13.8" y="204.8" width="3.6" height="3.8" fill="#f2f2f2"/><g transform="translate(15.8 211.4) scale(1.06)"><path d="M1.1 8 L1.1 3.8 A2.9 2.9 0 0 1 6.9 3.8 L6.9 8" fill="none" stroke="#d4182c" stroke-width="2.2"/><path d="M1.1 3.9 A2.9 2.9 0 0 1 6.9 3.9" fill="none" stroke="#f08a94" stroke-width="0.7"/><rect x="0" y="6.2" width="2.2" height="1.9" fill="#fff"/><rect x="5.8" y="6.2" width="2.2" height="1.9" fill="#fff"/></g><path d="M7.6 232.8 L17.4 228.4 L15.2 237.4Z" fill="none" stroke="#f2f2f2" stroke-width="1"/><g transform="translate(15.8 235.4) scale(1.06)"><path d="M1.1 8 L1.1 3.8 A2.9 2.9 0 0 1 6.9 3.8 L6.9 8" fill="none" stroke="#d4182c" stroke-width="2.2"/><path d="M1.1 3.9 A2.9 2.9 0 0 1 6.9 3.9" fill="none" stroke="#f08a94" stroke-width="0.7"/><rect x="0" y="6.2" width="2.2" height="1.9" fill="#fff"/><rect x="5.8" y="6.2" width="2.2" height="1.9" fill="#fff"/></g><path d="M7 257.6 L18.4 251.6 L16 261.6Z" fill="#f2f2f2"/><g transform="translate(15.8 259.8) scale(1.06)"><path d="M1.1 8 L1.1 3.8 A2.9 2.9 0 0 1 6.9 3.8 L6.9 8" fill="none" stroke="#d4182c" stroke-width="2.2"/><path d="M1.1 3.9 A2.9 2.9 0 0 1 6.9 3.9" fill="none" stroke="#f08a94" stroke-width="0.7"/><rect x="0" y="6.2" width="2.2" height="1.9" fill="#fff"/><rect x="5.8" y="6.2" width="2.2" height="1.9" fill="#fff"/></g><rect x="3" y="271" width="24" height="1.1" fill="#1e1e1e"/><rect x="3" y="272.1" width="24" height="0.8" fill="#5a5a5a"/><g stroke="#f2f2f2" stroke-width="1.3"><path d="M11 279.6 L11 288 M7.4 281.7 L14.6 285.9 M14.6 281.7 L7.4 285.9"/></g><circle cx="11" cy="283.8" r="1.1" fill="#444"/><g transform="translate(15.8 287) scale(1.06)"><path d="M1.1 8 L1.1 3.8 A2.9 2.9 0 0 1 6.9 3.8 L6.9 8" fill="none" stroke="#d4182c" stroke-width="2.2"/><path d="M1.1 3.9 A2.9 2.9 0 0 1 6.9 3.9" fill="none" stroke="#f08a94" stroke-width="0.7"/><rect x="0" y="6.2" width="2.2" height="1.9" fill="#fff"/><rect x="5.8" y="6.2" width="2.2" height="1.9" fill="#fff"/></g><rect x="2.2" y="301" width="24.4" height="22.6" fill="#1a1a1a"/><rect x="3" y="301.8" width="22.8" height="21.0" fill="#3d83db"/><g transform="translate(15.8 313) scale(1.06)"><path d="M1.1 8 L1.1 3.8 A2.9 2.9 0 0 1 6.9 3.8 L6.9 8" fill="none" stroke="#d4182c" stroke-width="2.2"/><path d="M1.1 3.9 A2.9 2.9 0 0 1 6.9 3.9" fill="none" stroke="#f08a94" stroke-width="0.7"/><rect x="0" y="6.2" width="2.2" height="1.9" fill="#fff"/><rect x="5.8" y="6.2" width="2.2" height="1.9" fill="#fff"/></g><rect x="3" y="330.2" width="24" height="1.1" fill="#1e1e1e"/><rect x="3" y="331.3" width="24" height="0.8" fill="#5a5a5a"/><rect x="2.2" y="382.8" width="24.4" height="22.4" fill="#1a1a1a"/><rect x="3" y="383.6" width="22.8" height="20.799999999999997" fill="#3d83db"/><path d="M22.0 428.8 L25.8 425.0 L25.8 428.8Z" fill="#f8f8f8" stroke="#161616" stroke-width="0.6"/><rect x="2.2" y="430.6" width="24.4" height="22.4" fill="#1a1a1a"/><rect x="3" y="431.40000000000003" width="22.8" height="20.799999999999997" fill="#3d83db"/><g transform="translate(15.8 442.6) scale(1.06)"><path d="M1.1 8 L1.1 3.8 A2.9 2.9 0 0 1 6.9 3.8 L6.9 8" fill="none" stroke="#d4182c" stroke-width="2.2"/><path d="M1.1 3.9 A2.9 2.9 0 0 1 6.9 3.9" fill="none" stroke="#f08a94" stroke-width="0.7"/><rect x="0" y="6.2" width="2.2" height="1.9" fill="#fff"/><rect x="5.8" y="6.2" width="2.2" height="1.9" fill="#fff"/></g></svg>
<div class="t" style="left:6.6px;top:303.5px;font-size:10px;color:#fff;letter-spacing:0.46px;">XY</div>
<div class="t" style="left:9.2px;top:338.0px;font-size:16px;color:#fff;-webkit-text-stroke:0.3px #fff;">X</div>
<div class="t" style="left:9.2px;top:361.8px;font-size:16px;color:#fff;-webkit-text-stroke:0.3px #fff;">Y</div>
<div class="t" style="left:9.6px;top:386.2px;font-size:16px;color:#fff;-webkit-text-stroke:0.3px #fff;">Z</div>
<div class="t" style="left:7.6px;top:413.0px;font-size:10.6px;color:#fff;">XY</div>
<div class="t" style="left:6.6px;top:432.9px;font-size:10px;color:#fff;letter-spacing:0.46px;">XY</div>
<!-- END:LEFTBAR -->
<!-- SECTION:VIEWPORT -->
<div class="abs" style="left:29px;top:96px;width:1176px;height:637px;background:#3a3a34"></div>
<div class="abs" id="vp" style="left:31px;top:97px;width:1172px;height:635px;border:2px solid #7c7c58;border-bottom:1.6px solid #9a7e58;background:linear-gradient(#1d1d1d 0%,#232323 20%,#2e2e2e 40%,#393939 60%,#444444 80%,#4d4d4d 100%);overflow:hidden">
<svg width="1168" height="631" viewBox="33 99 1168 631" style="left:0;top:0">
<defs>
<linearGradient id="pg1" gradientUnits="userSpaceOnUse" x1="256" y1="400" x2="862" y2="400">
<stop offset="0" stop-color="#b55040"/><stop offset="0.25" stop-color="#af4c3e"/><stop offset="0.5" stop-color="#ac4b3e"/><stop offset="0.68" stop-color="#b65040"/><stop offset="1" stop-color="#bd5643"/>
</linearGradient>
<linearGradient id="pg3" gradientUnits="userSpaceOnUse" x1="500" y1="180" x2="520" y2="580">
<stop offset="0" stop-color="#a86058" stop-opacity="0.55"/><stop offset="0.35" stop-color="#a4524a" stop-opacity="0.2"/><stop offset="0.7" stop-color="#b45244" stop-opacity="0.15"/><stop offset="1" stop-color="#bc5646" stop-opacity="0.5"/>
</linearGradient>
<linearGradient id="cone" gradientUnits="userSpaceOnUse" x1="552" y1="478" x2="562" y2="290">
<stop offset="0" stop-color="#c8a0a4" stop-opacity="0.95"/><stop offset="0.3" stop-color="#b48488" stop-opacity="0.8"/><stop offset="0.7" stop-color="#a87478" stop-opacity="0.5"/><stop offset="1" stop-color="#a07074" stop-opacity="0"/>
</linearGradient>
<linearGradient id="cone2" gradientUnits="userSpaceOnUse" x1="552" y1="478" x2="556" y2="390">
<stop offset="0" stop-color="#d8b8bc" stop-opacity="0.9"/><stop offset="0.5" stop-color="#c09a9e" stop-opacity="0.5"/><stop offset="1" stop-color="#b08a8e" stop-opacity="0"/>
</linearGradient>
<filter id="b1" x="-50%" y="-50%" width="200%" height="200%"><feGaussianBlur stdDeviation="1"/></filter>
<filter id="b3" x="-50%" y="-50%" width="200%" height="200%"><feGaussianBlur stdDeviation="3.5"/></filter>
<filter id="b8" x="-50%" y="-50%" width="200%" height="200%"><feGaussianBlur stdDeviation="10"/></filter>
<filter id="b14" x="-50%" y="-50%" width="200%" height="200%"><feGaussianBlur stdDeviation="20"/></filter>
<clipPath id="pclip"><path d="M647.6 182 Q490.5 226 327 235.6 Q301.2 358 256 475 Q442 550 640.6 578.8 Q759.6 474.2 861.4 353 Q739.5 286.5 647.6 182Z"/></clipPath>
</defs>
<path d="M647.6 182 Q490.5 226 327 235.6 Q301.2 358 256 475 Q442 550 640.6 578.8 Q759.6 474.2 861.4 353 Q739.5 286.5 647.6 182Z" fill="url(#pg1)"/>
<g clip-path="url(#pclip)">
<rect x="250" y="175" width="620" height="410" fill="url(#pg3)"/>
<path d="M552 495 L415 150 L735 150 Z" fill="#9a666a" filter="url(#b14)" opacity="0.78"/>
<path d="M552 482 L520 250 L640 250 Z" fill="#a06c72" filter="url(#b8)" opacity="0.5"/>
<path d="M545 482 L450 400 L510 310 Z" fill="#8a3730" filter="url(#b14)" opacity="0.3"/>
<path d="M551.5 478 L541 300 L581 300 Z" fill="url(#cone)" filter="url(#b3)"/>
<path d="M551.5 477 L550.5 390 L559.5 390 Z" fill="url(#cone2)" filter="url(#b1)"/>
</g>
<path d="M549.4 476.4 l2.4 -2.6 l1.8 1.6 l-1.6 2.8z" fill="#3a2a2a"/>
<!-- axis tripod -->
<g stroke-width="1.2" fill="none">
<path d="M52.3 711.4 L52.3 697" stroke="#1a1a9c"/>
<path d="M52.6 711 L65.6 696.4" stroke="#9a2c2c" opacity="0.55"/>
<path d="M52 711 L39.6 696.6" stroke="#2a7a3a" opacity="0.45"/>
</g>
</svg>
<!-- viewcube -->
<svg width="70" height="60" viewBox="1125 118 70 60" style="left:1092px;top:19px">
<ellipse cx="1158.9" cy="153.8" rx="27" ry="17.6" fill="#8b8e8e"/>
<ellipse cx="1158.9" cy="152.6" rx="22" ry="13" fill="#25282a"/>
<path d="M1156 123 L1174 131 L1173 147 L1161 158 L1145 149 L1143 135 Z" fill="#8f9292"/>
<path d="M1156 123 L1174 131 L1161 140 L1143 135 Z" fill="#959898"/>
<path d="M1161 140 L1174 131 L1173 147 L1161 158 Z" fill="#858888"/>
<path d="M1143 135 L1161 140 L1161 158 L1145 149 Z" fill="#8d9090"/>
</svg>
</div>
<div class="t" style="left:34.8px;top:102.6px;font-size:9.3px;color:#dcdcdc;letter-spacing:0.40px;">[+]</div>
<div class="t" style="left:48.4px;top:102.6px;font-size:9.3px;color:#dcdcdc;letter-spacing:0.15px;">[Perspective</div>
<div class="t" style="left:102.6px;top:102.6px;font-size:9.3px;color:#dcdcdc;">]</div>
<div class="t" style="left:107.4px;top:102.6px;font-size:9.3px;color:#dcdcdc;">[Clay</div>
<div class="t" style="left:130.0px;top:102.6px;font-size:9.3px;color:#dcdcdc;">]</div>
<div class="t" style="left:74.1px;top:125.9px;font-size:8.8px;color:#d0d07a;letter-spacing:0.13px;">Total</div>
<div class="t" style="left:42.5px;top:138.3px;font-size:8.8px;color:#d0d07a;transform:scaleX(0.939);transform-origin:0 0;">Polys:</div>
<div class="t" style="left:74.1px;top:138.3px;font-size:8.8px;color:#d0d07a;transform:scaleX(0.940);transform-origin:0 0;">178 374</div>
<div class="t" style="left:42.5px;top:150.7px;font-size:8.8px;color:#d0d07a;">Verts:</div>
<div class="t" style="left:74.1px;top:150.7px;font-size:8.8px;color:#d0d07a;transform:scaleX(0.946);transform-origin:0 0;">108 220</div>
<div class="t" style="left:42.5px;top:175.8px;font-size:8.8px;color:#d0d07a;transform:scaleX(0.859);transform-origin:0 0;">FPS:</div>
<div class="t" style="left:74.1px;top:175.8px;font-size:8.8px;color:#d0d07a;transform:scaleX(0.978);transform-origin:0 0;">135,788</div>
<div class="t" style="left:428.2px;top:616.8px;font-size:69px;color:#c4c3c0;font-weight:bold;">Result</div>
<div class="t" style="left:50.8px;top:689.2px;font-size:6.5px;color:#2222b8;font-weight:bold;">z</div>
<div class="t" style="left:63.4px;top:692.2px;font-size:6.5px;color:#a83030;font-weight:bold;">x</div>
<!-- END:VIEWPORT -->
<!-- SECTION:CMDPANEL -->
<div class="abs" style="left:1204px;top:96px;width:284px;height:710px;background:#444"></div>
<div class="abs" style="left:1346px;top:118px;width:1px;height:648px;background:#2e2e2e"></div>
<div class="abs" style="left:1347px;top:118px;width:1px;height:648px;background:#565656"></div>
<div class="abs" style="left:1348px;top:118px;width:136px;height:1.4px;background:#262626"></div>
<div class="abs" style="left:1349px;top:119.4px;width:134px;height:646px;background:#454545"></div>
<div class="abs" style="left:1483px;top:118px;width:1px;height:648px;background:#3a3a3a"></div>
<div class="abs" style="left:1206px;top:118px;width:280px;height:1.2px;background:#262626"></div>
<div class="abs" style="left:1204.8px;top:99.6px;width:21.600000000000136px;height:18.8px;background:#3b3b3b;border:1px solid #1c1c1c;border-bottom:none;border-radius:3px 3px 0 0"></div>
<div class="abs" style="left:1227.8px;top:98.2px;width:20.799999999999955px;height:21px;background:#474747;border:1px solid #1c1c1c;border-bottom:none;border-radius:3px 3px 0 0"></div>
<div class="abs" style="left:1250px;top:99.6px;width:21.200000000000045px;height:18.8px;background:#3b3b3b;border:1px solid #1c1c1c;border-bottom:none;border-radius:3px 3px 0 0"></div>
<div class="abs" style="left:1272.6px;top:99.6px;width:21.200000000000045px;height:18.8px;background:#3b3b3b;border:1px solid #1c1c1c;border-bottom:none;border-radius:3px 3px 0 0"></div>
<div class="abs" style="left:1295px;top:99.6px;width:21px;height:18.8px;background:#3b3b3b;border:1px solid #1c1c1c;border-bottom:none;border-radius:3px 3px 0 0"></div>
<div class="abs" style="left:1317.2px;top:99.6px;width:21.200000000000045px;height:18.8px;background:#3b3b3b;border:1px solid #1c1c1c;border-bottom:none;border-radius:3px 3px 0 0"></div>
<svg style="left:1204px;top:96px" width="140" height="24" viewBox="1204 96 140 24"><defs><radialGradient id="sun"><stop offset="0" stop-color="#fff27a"/><stop offset="0.5" stop-color="#f8b830"/><stop offset="1" stop-color="#d87818"/></radialGradient></defs><path d="M1215.6 101.8 L1216.6 105 L1219.6 103.4 L1218.6 106.6 L1221.8 108.2 L1218.6 109.8 L1219.8 113 L1216.6 111.6 L1215.6 115 L1214.6 111.6 L1211.4 113 L1212.6 109.8 L1209.4 108.2 L1212.6 106.6 L1211.6 103.4 L1214.6 105Z" fill="#e89828"/><circle cx="1215.6" cy="108.2" r="3.9" fill="url(#sun)"/><rect x="1231.2" y="101.4" width="13.8" height="13.2" fill="#2c4a78"/><path d="M1231.6 114.6 Q1232 103 1245 101.6 L1245 104.6 Q1235.6 105.8 1234.6 114.6Z" fill="#8ad0f4"/><path d="M1231.6 114.6 Q1232 103 1245 101.6" fill="none" stroke="#e8f8ff" stroke-width="0.9"/><path d="M1231.4 101.4 L1231.4 114.8 L1245 114.8" fill="none" stroke="#f0f0f0" stroke-width="0.8"/><rect x="1230.6" y="100.6" width="1.8" height="1.8" fill="#fff"/><rect x="1244" y="113.8" width="1.8" height="1.8" fill="#fff"/><rect x="1256.6" y="101" width="8" height="6.8" fill="#e8e8e8"/><path d="M1260.6 107.8 L1260.6 111 M1260.6 108.6 L1254.4 112 M1260.6 108.6 L1266.8 112" stroke="#f0f0f0" stroke-width="1" fill="none"/><rect x="1252.8" y="111.6" width="3.4" height="3.2" fill="#f4f4f4"/><rect x="1258.9" y="111.6" width="3.4" height="3.2" fill="#f4f4f4"/><rect x="1265" y="111.6" width="3.4" height="3.2" fill="#f4f4f4"/><circle cx="1284.2" cy="108" r="5.6" fill="none" stroke="#f0f0f0" stroke-width="1.8"/><circle cx="1284.2" cy="108" r="2.2" fill="none" stroke="#f0f0f0" stroke-width="1.3"/><path d="M1277.8 103.6 Q1275.6 108 1277.8 112.4" fill="none" stroke="#b8b8b8" stroke-width="0.9"/><path d="M1275.6 104.6 Q1274.2 108 1275.6 111.4" fill="none" stroke="#8a8a8a" stroke-width="0.7"/><rect x="1298.6" y="101.2" width="14.2" height="10" fill="#f2f2f2"/><rect x="1303.6" y="103" width="4.6" height="4.8" fill="none" stroke="#222" stroke-width="1"/><rect x="1302.6" y="112.6" width="6.2" height="1" fill="#f2f2f2"/><rect x="1300.6" y="114.2" width="10.2" height="0.9" fill="#c8c8c8"/><path d="M1322 114.8 L1331.4 104.2" stroke="#c0c0c0" stroke-width="2.2" stroke-linecap="round"/><path d="M1328 102.4 Q1332.6 100.6 1335.6 105.6 L1333.4 106.8 Q1332.4 104.4 1329.6 104.6Z" fill="#d8d8d8" stroke="#d8d8d8" stroke-width="0.8"/></svg>
<div class="abs" style="left:1211.6px;top:122.6px;width:113px;height:14.8px;background:#565656;border:2px solid #1a1a1a;border-right:1px solid #666;border-bottom:1px solid #666"></div>
<div class="abs" style="left:1328px;top:122.2px;width:12.6px;height:15.4px;background:#9c0c3c;border:1px solid #6a0828"></div>
<div class="abs" style="left:1211.6px;top:142px;width:127px;height:17.8px;background:#5a5a5a;border:2px solid #1a1a1a;border-right:1px solid #2a2a2a;border-bottom:1px solid #2a2a2a"></div>
<div class="abs" style="left:1324px;top:143.6px;width:13.6px;height:15.2px;background:#fafafa"></div>
<svg style="left:1326.4px;top:148px" width="10" height="7" viewBox="0 0 10 7"><path d="M1 1.2 L4.4 4.8 L7.8 1.2" fill="none" stroke="#333" stroke-width="1.1"/></svg>
<div class="t" style="left:1214.0px;top:146.8px;font-size:9.2px;color:#f6f6f6;transform:scaleX(0.899);transform-origin:0 0;">Modifier List</div>
<div class="abs" style="left:1216.4px;top:166.2px;width:55.2px;height:15.4px;background:#454545;border:1px solid #2a2a2a;border-top-color:#505050;border-left-color:#4c4c4c;border-right-color:#202020;border-bottom-color:#1c1c1c"></div>
<div class="t" style="left:1219.0px;top:169.7px;font-size:8.8px;color:#141414;transform:scaleX(0.925);transform-origin:0 0;-webkit-text-stroke:0.25px #141414;">TurboSmooth</div>
<div class="abs" style="left:1274.6px;top:166.2px;width:55.2px;height:15.4px;background:#454545;border:1px solid #2a2a2a;border-top-color:#505050;border-left-color:#4c4c4c;border-right-color:#202020;border-bottom-color:#1c1c1c"></div>
<div class="t" style="left:1292.6px;top:169.7px;font-size:8.8px;color:#141414;transform:scaleX(0.920);transform-origin:0 0;-webkit-text-stroke:0.25px #141414;">Shell</div>
<div class="abs" style="left:1216.4px;top:183.89999999999998px;width:55.2px;height:15.4px;background:#454545;border:1px solid #2a2a2a;border-top-color:#505050;border-left-color:#4c4c4c;border-right-color:#202020;border-bottom-color:#1c1c1c"></div>
<div class="t" style="left:1229.4px;top:187.4px;font-size:8.8px;color:#141414;transform:scaleX(0.943);transform-origin:0 0;-webkit-text-stroke:0.25px #141414;">Smooth</div>
<div class="abs" style="left:1274.6px;top:183.89999999999998px;width:55.2px;height:15.4px;background:#454545;border:1px solid #2a2a2a;border-top-color:#505050;border-left-color:#4c4c4c;border-right-color:#202020;border-bottom-color:#1c1c1c"></div>
<div class="t" style="left:1285.0px;top:187.4px;font-size:8.8px;color:#141414;transform:scaleX(0.939);transform-origin:0 0;-webkit-text-stroke:0.25px #141414;">Edit Poly</div>
<div class="abs" style="left:1216.4px;top:201.6px;width:55.2px;height:15.4px;background:#454545;border:1px solid #2a2a2a;border-top-color:#505050;border-left-color:#4c4c4c;border-right-color:#202020;border-bottom-color:#1c1c1c"></div>
<div class="t" style="left:1222.4px;top:205.1px;font-size:8.8px;color:#141414;transform:scaleX(0.909);transform-origin:0 0;-webkit-text-stroke:0.25px #141414;">UVW Xform</div>
<div class="abs" style="left:1274.6px;top:201.6px;width:55.2px;height:15.4px;background:#454545;border:1px solid #2a2a2a;border-top-color:#505050;border-left-color:#4c4c4c;border-right-color:#202020;border-bottom-color:#1c1c1c"></div>
<div class="t" style="left:1275.0px;top:205.1px;font-size:8.8px;color:#141414;transform:scaleX(0.936);transform-origin:0 0;-webkit-text-stroke:0.25px #141414;">Quad Chamfer</div>
<div class="abs" style="left:1216.4px;top:219.29999999999998px;width:55.2px;height:15.4px;background:#454545;border:1px solid #2a2a2a;border-top-color:#505050;border-left-color:#4c4c4c;border-right-color:#202020;border-bottom-color:#1c1c1c"></div>
<div class="t" style="left:1223.0px;top:222.8px;font-size:8.8px;color:#141414;transform:scaleX(0.962);transform-origin:0 0;-webkit-text-stroke:0.25px #141414;">FFD 2x2x2</div>
<div class="abs" style="left:1274.6px;top:219.29999999999998px;width:55.2px;height:15.4px;background:#454545;border:1px solid #2a2a2a;border-top-color:#505050;border-left-color:#4c4c4c;border-right-color:#202020;border-bottom-color:#1c1c1c"></div>
<div class="t" style="left:1281.4px;top:222.8px;font-size:8.8px;color:#141414;transform:scaleX(0.962);transform-origin:0 0;-webkit-text-stroke:0.25px #141414;">FFD 3x3x3</div>
<div class="abs" style="left:1216.4px;top:237.0px;width:55.2px;height:15.4px;background:#454545;border:1px solid #2a2a2a;border-top-color:#505050;border-left-color:#4c4c4c;border-right-color:#202020;border-bottom-color:#1c1c1c"></div>
<div class="t" style="left:1218.6px;top:240.5px;font-size:8.8px;color:#141414;transform:scaleX(0.931);transform-origin:0 0;-webkit-text-stroke:0.25px #141414;">Unwrap UVW</div>
<div class="abs" style="left:1274.6px;top:237.0px;width:55.2px;height:15.4px;background:#454545;border:1px solid #2a2a2a;border-top-color:#505050;border-left-color:#4c4c4c;border-right-color:#202020;border-bottom-color:#1c1c1c"></div>
<div class="t" style="left:1284.0px;top:240.5px;font-size:8.8px;color:#141414;transform:scaleX(0.883);transform-origin:0 0;-webkit-text-stroke:0.25px #141414;">UVW Map</div>
<div class="abs" style="left:1216.4px;top:254.7px;width:55.2px;height:15.4px;background:#454545;border:1px solid #2a2a2a;border-top-color:#505050;border-left-color:#4c4c4c;border-right-color:#202020;border-bottom-color:#1c1c1c"></div>
<div class="t" style="left:1228.6px;top:258.2px;font-size:8.8px;color:#141414;transform:scaleX(0.959);transform-origin:0 0;-webkit-text-stroke:0.25px #141414;">Material</div>
<div class="abs" style="left:1274.6px;top:254.7px;width:55.2px;height:15.4px;background:#454545;border:1px solid #2a2a2a;border-top-color:#505050;border-left-color:#4c4c4c;border-right-color:#202020;border-bottom-color:#1c1c1c"></div>
<div class="t" style="left:1283.0px;top:258.2px;font-size:8.8px;color:#141414;transform:scaleX(0.944);transform-origin:0 0;-webkit-text-stroke:0.25px #141414;">Symmetry</div>
<div class="abs" style="left:1211.6px;top:276.2px;width:125.2px;height:98px;background:#565656;border:1.3px solid #f0f0f0"></div>
<svg style="left:1204px;top:376px" width="140" height="20" viewBox="1204 376 140 20"><path d="M1214.6 386.4 L1219 386.4" stroke="#ececec" stroke-width="1"/><path d="M1219 384.6 L1221 384.6 L1221 383 L1226.6 383 L1226.6 389.8 L1221 389.8 L1221 388.2 L1219 388.2Z" fill="#ececec"/><rect x="1222.4" y="384.2" width="1" height="4.4" fill="#777"/><rect x="1234.6" y="380.4" width="1.2" height="12" fill="#222"/><rect x="1262.2" y="380.4" width="1.2" height="12" fill="#222"/><rect x="1308.6" y="380.4" width="1.2" height="12" fill="#222"/><path d="M1239.2 394.6 L1239.2 377.4 L1258 377.4" fill="none" stroke="#2a2a2a" stroke-width="1"/><path d="M1258 377.4 L1258 394.6" fill="none" stroke="#525252" stroke-width="0.8"/><rect x="1246.6" y="381.4" width="1.8" height="10.6" fill="#ececec"/><rect x="1251.6" y="381.4" width="1.8" height="10.6" fill="#ececec"/><path d="M1271.4 381.6 L1277 391.4 L1282.6 381.6" fill="none" stroke="#ececec" stroke-width="1.3"/><circle cx="1277" cy="388.4" r="2" fill="none" stroke="#ececec" stroke-width="1.1"/><path d="M1291.6 386 Q1291.6 382.4 1295.4 382.2 Q1299.4 382.4 1299.4 386 L1299.4 388.6 Q1299.2 391.8 1295.4 391.8 Q1291.8 391.8 1291.6 388.6Z" fill="none" stroke="#ececec" stroke-width="1.2"/><path d="M1292 386.4 L1299 386.4" stroke="#ececec" stroke-width="1"/><path d="M1294 382.6 Q1295.4 380.6 1297 382.6" fill="none" stroke="#ececec" stroke-width="0.9"/><rect x="1316.6" y="380.4" width="10.4" height="11.4" fill="#d8d8e8"/><rect x="1316.6" y="380.4" width="10.4" height="3" fill="#2a2ab8"/><rect x="1318.4" y="385.4" width="4.6" height="4.6" fill="#2a2a8a"/><rect x="1319.6" y="386.6" width="2.2" height="2.2" fill="#f4f4f4"/><rect x="1324" y="385.4" width="2.4" height="1.8" fill="#fff"/><rect x="1324" y="388.6" width="2.4" height="1.8" fill="#fff"/></svg>
<div class="abs" style="left:1206.2px;top:404.4px;width:136px;height:1.6px;background:#1c1c1c"></div>
<div class="abs" style="left:1206.2px;top:411.2px;width:134px;height:1.2px;background:#2a2a2a"></div>
<div class="abs" style="left:1206.2px;top:412.4px;width:134px;height:0.8px;background:#4e4e4e"></div>
<div class="abs" style="left:1340.2px;top:412px;width:0.9px;height:354px;background:#3c3c3c"></div>
<!-- END:CMDPANEL -->
<!-- SECTION:TIMELINE -->
<div class="abs" style="left:31px;top:733px;width:1172px;height:13px;background:#474747"></div>
<div class="abs" style="left:31.4px;top:732.6px;width:11.6px;height:12.8px;background:#444;border:1px solid #262626;border-top-color:#5e5e5e;border-left-color:#5a5a5a"></div>
<div class="abs" style="left:43.6px;top:732.6px;width:96.4px;height:12.8px;background:#3b3b3b;border:1px solid #262626;border-top-color:#5e5e5e;border-left-color:#5a5a5a"></div>
<div class="abs" style="left:140.6px;top:732.6px;width:12px;height:12.8px;background:#444;border:1px solid #262626;border-top-color:#5e5e5e;border-left-color:#5a5a5a"></div>
<div class="t" style="left:34.4px;top:734.5px;font-size:9.5px;color:#dcdcdc;">&lt;</div>
<div class="t" style="left:143.8px;top:734.5px;font-size:9.5px;color:#dcdcdc;">></div>
<div class="t" style="left:77.8px;top:734.9px;font-size:9.3px;color:#dedede;transform:scaleX(0.928);transform-origin:0 0;">0 / 100</div>
<div class="abs" style="left:31px;top:746px;width:1172px;height:1.2px;background:#1c1c1c"></div>
<div class="abs" style="left:31px;top:747.2px;width:40px;height:20px;background:#3c3c3c"></div>
<div class="abs" style="left:71px;top:747.2px;width:1092px;height:20px;background:#313131"></div>
<div class="abs" style="left:71px;top:766.4px;width:1092px;height:1px;background:#1c1c1c"></div>
<svg style="left:31px;top:746px" width="1172" height="22" viewBox="31 746 1172 22"><rect x="73.60" y="747.4" width="0.9" height="8.6" fill="#969696"/><rect x="84.46" y="747.4" width="0.9" height="8.6" fill="#969696"/><rect x="95.31" y="747.4" width="0.9" height="8.6" fill="#969696"/><rect x="106.17" y="747.4" width="0.9" height="8.6" fill="#969696"/><rect x="117.03" y="747.4" width="0.9" height="8.6" fill="#969696"/><rect x="127.88" y="747.4" width="0.9" height="8.6" fill="#969696"/><rect x="138.74" y="747.4" width="0.9" height="8.6" fill="#969696"/><rect x="149.60" y="747.4" width="0.9" height="8.6" fill="#969696"/><rect x="160.46" y="747.4" width="0.9" height="8.6" fill="#969696"/><rect x="171.31" y="747.4" width="0.9" height="8.6" fill="#969696"/><rect x="182.17" y="747.4" width="0.9" height="8.6" fill="#969696"/><rect x="193.03" y="747.4" width="0.9" height="8.6" fill="#969696"/><rect x="203.88" y="747.4" width="0.9" height="8.6" fill="#969696"/><rect x="214.74" y="747.4" width="0.9" height="8.6" fill="#969696"/><rect x="225.60" y="747.4" width="0.9" height="8.6" fill="#969696"/><rect x="236.45" y="747.4" width="0.9" height="8.6" fill="#969696"/><rect x="247.31" y="747.4" width="0.9" height="8.6" fill="#969696"/><rect x="258.17" y="747.4" width="0.9" height="8.6" fill="#969696"/><rect x="269.03" y="747.4" width="0.9" height="8.6" fill="#969696"/><rect x="279.88" y="747.4" width="0.9" height="8.6" fill="#969696"/><rect x="290.74" y="747.4" width="0.9" height="8.6" fill="#969696"/><rect x="301.60" y="747.4" width="0.9" height="8.6" fill="#969696"/><rect x="312.45" y="747.4" width="0.9" height="8.6" fill="#969696"/><rect x="323.31" y="747.4" width="0.9" height="8.6" fill="#969696"/><rect x="334.17" y="747.4" width="0.9" height="8.6" fill="#969696"/><rect x="345.02" y="747.4" width="0.9" height="8.6" fill="#969696"/><rect x="355.88" y="747.4" width="0.9" height="8.6" fill="#969696"/><rect x="366.74" y="747.4" width="0.9" height="8.6" fill="#969696"/><rect x="377.60" y="747.4" width="0.9" height="8.6" fill="#969696"/><rect x="388.45" y="747.4" width="0.9" height="8.6" fill="#969696"/><rect x="399.31" y="747.4" width="0.9" height="8.6" fill="#969696"/><rect x="410.17" y="747.4" width="0.9" height="8.6" fill="#969696"/><rect x="421.02" y="747.4" width="0.9" height="8.6" fill="#969696"/><rect x="431.88" y="747.4" width="0.9" height="8.6" fill="#969696"/><rect x="442.74" y="747.4" width="0.9" height="8.6" fill="#969696"/><rect x="453.60" y="747.4" width="0.9" height="8.6" fill="#969696"/><rect x="464.45" y="747.4" width="0.9" height="8.6" fill="#969696"/><rect x="475.31" y="747.4" width="0.9" height="8.6" fill="#969696"/><rect x="486.17" y="747.4" width="0.9" height="8.6" fill="#969696"/><rect x="497.02" y="747.4" width="0.9" height="8.6" fill="#969696"/><rect x="507.88" y="747.4" width="0.9" height="8.6" fill="#969696"/><rect x="518.74" y="747.4" width="0.9" height="8.6" fill="#969696"/><rect x="529.59" y="747.4" width="0.9" height="8.6" fill="#969696"/><rect x="540.45" y="747.4" width="0.9" height="8.6" fill="#969696"/><rect x="551.31" y="747.4" width="0.9" height="8.6" fill="#969696"/><rect x="562.16" y="747.4" width="0.9" height="8.6" fill="#969696"/><rect x="573.02" y="747.4" width="0.9" height="8.6" fill="#969696"/><rect x="583.88" y="747.4" width="0.9" height="8.6" fill="#969696"/><rect x="594.74" y="747.4" width="0.9" height="8.6" fill="#969696"/><rect x="605.59" y="747.4" width="0.9" height="8.6" fill="#969696"/><rect x="616.45" y="747.4" width="0.9" height="8.6" fill="#969696"/><rect x="627.31" y="747.4" width="0.9" height="8.6" fill="#969696"/><rect x="638.16" y="747.4" width="0.9" height="8.6" fill="#969696"/><rect x="649.02" y="747.4" width="0.9" height="8.6" fill="#969696"/><rect x="659.88" y="747.4" width="0.9" height="8.6" fill="#969696"/><rect x="670.74" y="747.4" width="0.9" height="8.6" fill="#969696"/><rect x="681.59" y="747.4" width="0.9" height="8.6" fill="#969696"/><rect x="692.45" y="747.4" width="0.9" height="8.6" fill="#969696"/><rect x="703.31" y="747.4" width="0.9" height="8.6" fill="#969696"/><rect x="714.16" y="747.4" width="0.9" height="8.6" fill="#969696"/><rect x="725.02" y="747.4" width="0.9" height="8.6" fill="#969696"/><rect x="735.88" y="747.4" width="0.9" height="8.6" fill="#969696"/><rect x="746.73" y="747.4" width="0.9" height="8.6" fill="#969696"/><rect x="757.59" y="747.4" width="0.9" height="8.6" fill="#969696"/><rect x="768.45" y="747.4" width="0.9" height="8.6" fill="#969696"/><rect x="779.30" y="747.4" width="0.9" height="8.6" fill="#969696"/><rect x="790.16" y="747.4" width="0.9" height="8.6" fill="#969696"/><rect x="801.02" y="747.4" width="0.9" height="8.6" fill="#969696"/><rect x="811.88" y="747.4" width="0.9" height="8.6" fill="#969696"/><rect x="822.73" y="747.4" width="0.9" height="8.6" fill="#969696"/><rect x="833.59" y="747.4" width="0.9" height="8.6" fill="#969696"/><rect x="844.45" y="747.4" width="0.9" height="8.6" fill="#969696"/><rect x="855.30" y="747.4" width="0.9" height="8.6" fill="#969696"/><rect x="866.16" y="747.4" width="0.9" height="8.6" fill="#969696"/><rect x="877.02" y="747.4" width="0.9" height="8.6" fill="#969696"/><rect x="887.88" y="747.4" width="0.9" height="8.6" fill="#969696"/><rect x="898.73" y="747.4" width="0.9" height="8.6" fill="#969696"/><rect x="909.59" y="747.4" width="0.9" height="8.6" fill="#969696"/><rect x="920.45" y="747.4" width="0.9" height="8.6" fill="#969696"/><rect x="931.30" y="747.4" width="0.9" height="8.6" fill="#969696"/><rect x="942.16" y="747.4" width="0.9" height="8.6" fill="#969696"/><rect x="953.02" y="747.4" width="0.9" height="8.6" fill="#969696"/><rect x="963.87" y="747.4" width="0.9" height="8.6" fill="#969696"/><rect x="974.73" y="747.4" width="0.9" height="8.6" fill="#969696"/><rect x="985.59" y="747.4" width="0.9" height="8.6" fill="#969696"/><rect x="996.44" y="747.4" width="0.9" height="8.6" fill="#969696"/><rect x="1007.30" y="747.4" width="0.9" height="8.6" fill="#969696"/><rect x="1018.16" y="747.4" width="0.9" height="8.6" fill="#969696"/><rect x="1029.02" y="747.4" width="0.9" height="8.6" fill="#969696"/><rect x="1039.87" y="747.4" width="0.9" height="8.6" fill="#969696"/><rect x="1050.73" y="747.4" width="0.9" height="8.6" fill="#969696"/><rect x="1061.59" y="747.4" width="0.9" height="8.6" fill="#969696"/><rect x="1072.44" y="747.4" width="0.9" height="8.6" fill="#969696"/><rect x="1083.30" y="747.4" width="0.9" height="8.6" fill="#969696"/><rect x="1094.16" y="747.4" width="0.9" height="8.6" fill="#969696"/><rect x="1105.01" y="747.4" width="0.9" height="8.6" fill="#969696"/><rect x="1115.87" y="747.4" width="0.9" height="8.6" fill="#969696"/><rect x="1126.73" y="747.4" width="0.9" height="8.6" fill="#969696"/><rect x="1137.59" y="747.4" width="0.9" height="8.6" fill="#969696"/><rect x="1148.44" y="747.4" width="0.9" height="8.6" fill="#969696"/><rect x="1159.30" y="747.4" width="0.9" height="8.6" fill="#969696"/><rect x="72" y="748" width="5.6" height="19" fill="#8c8c2c"/><rect x="72" y="748" width="5.6" height="19" fill="none" stroke="#a8a83a" stroke-width="0.6"/><rect x="41.4" y="751.2" width="12.8" height="4" fill="none" stroke="#ececec" stroke-width="0.9"/><path d="M43 753.2 Q45 751.6 47.6 753.2 T52.4 753.2" fill="none" stroke="#ececec" stroke-width="0.6"/><rect x="41" y="761.8" width="13.6" height="1.8" fill="#ececec"/><path d="M44.6 756.4 L44.6 760.6 M43 758 L44.6 756.4 L46.2 758 M51 756.4 L51 760.6 M49.4 759 L51 760.6 L52.6 759" fill="none" stroke="#ececec" stroke-width="0.8"/></svg>
<div class="t" style="left:72.8px;top:758.5px;font-size:8.4px;color:#d8d840;">0</div>
<div class="t" style="left:126.2px;top:758.0px;font-size:8.8px;color:#e2e2e2;">5</div>
<div class="t" style="left:178.5px;top:758.0px;font-size:8.8px;color:#e2e2e2;transform:scaleX(0.838);transform-origin:0 0;">10</div>
<div class="t" style="left:232.8px;top:758.0px;font-size:8.8px;color:#e2e2e2;transform:scaleX(0.838);transform-origin:0 0;">15</div>
<div class="t" style="left:287.0px;top:758.0px;font-size:8.8px;color:#e2e2e2;transform:scaleX(0.838);transform-origin:0 0;">20</div>
<div class="t" style="left:341.3px;top:758.0px;font-size:8.8px;color:#e2e2e2;transform:scaleX(0.838);transform-origin:0 0;">25</div>
<div class="t" style="left:395.6px;top:758.0px;font-size:8.8px;color:#e2e2e2;transform:scaleX(0.838);transform-origin:0 0;">30</div>
<div class="t" style="left:449.9px;top:758.0px;font-size:8.8px;color:#e2e2e2;transform:scaleX(0.838);transform-origin:0 0;">35</div>
<div class="t" style="left:504.2px;top:758.0px;font-size:8.8px;color:#e2e2e2;transform:scaleX(0.838);transform-origin:0 0;">40</div>
<div class="t" style="left:558.5px;top:758.0px;font-size:8.8px;color:#e2e2e2;transform:scaleX(0.838);transform-origin:0 0;">45</div>
<div class="t" style="left:612.7px;top:758.0px;font-size:8.8px;color:#e2e2e2;transform:scaleX(0.838);transform-origin:0 0;">50</div>
<div class="t" style="left:667.0px;top:758.0px;font-size:8.8px;color:#e2e2e2;transform:scaleX(0.838);transform-origin:0 0;">55</div>
<div class="t" style="left:721.3px;top:758.0px;font-size:8.8px;color:#e2e2e2;transform:scaleX(0.838);transform-origin:0 0;">60</div>
<div class="t" style="left:775.6px;top:758.0px;font-size:8.8px;color:#e2e2e2;transform:scaleX(0.838);transform-origin:0 0;">65</div>
<div class="t" style="left:829.9px;top:758.0px;font-size:8.8px;color:#e2e2e2;transform:scaleX(0.838);transform-origin:0 0;">70</div>
<div class="t" style="left:884.2px;top:758.0px;font-size:8.8px;color:#e2e2e2;transform:scaleX(0.838);transform-origin:0 0;">75</div>
<div class="t" style="left:938.5px;top:758.0px;font-size:8.8px;color:#e2e2e2;transform:scaleX(0.838);transform-origin:0 0;">80</div>
<div class="t" style="left:992.7px;top:758.0px;font-size:8.8px;color:#e2e2e2;transform:scaleX(0.838);transform-origin:0 0;">85</div>
<div class="t" style="left:1047.0px;top:758.0px;font-size:8.8px;color:#e2e2e2;transform:scaleX(0.838);transform-origin:0 0;">90</div>
<div class="t" style="left:1101.3px;top:758.0px;font-size:8.8px;color:#e2e2e2;transform:scaleX(0.838);transform-origin:0 0;">95</div>
<div class="t" style="left:1153.5px;top:758.0px;font-size:8.8px;color:#e2e2e2;transform:scaleX(0.838);transform-origin:0 0;">100</div>
<!-- END:TIMELINE -->
<!-- SECTION:STATUS -->
<div class="abs" style="left:0px;top:768px;width:1488px;height:38.4px;background:#444"></div>
<div class="abs" style="left:1203.5px;top:765.6px;width:285px;height:1.2px;background:#2a2a2a"></div>
<div class="abs" style="left:0.6px;top:768.6px;width:76.8px;height:37.4px;background:#f4f4f4;border:1px solid #f8f8f8"></div>
<div class="abs" style="left:1.6px;top:769.4px;width:75px;height:16px;background:#e8c8cc"></div>
<div class="abs" style="left:1px;top:785.4px;width:76px;height:1.6px;background:#2c2c2c"></div>
<div class="abs" style="left:1.6px;top:787.6px;width:75px;height:17.4px;background:#fbfbfb"></div>
<div class="t" style="left:5.4px;top:789.9px;font-size:9.6px;color:#111;transform:scaleX(0.972);transform-origin:0 0;font-family:'Liberation Mono',monospace;-webkit-text-stroke:0.2px #111;">Welcome to M</div>
<div class="abs" style="left:78.6px;top:768.4px;width:1.6px;height:38px;background:#2a2a2a"></div>
<div class="abs" style="left:83.4px;top:770.4px;width:728px;height:17.2px;background:#444;border:1px solid #606060;border-top:1.6px solid #1e1e1e;border-left:1.6px solid #1e1e1e"></div>
<div class="abs" style="left:83.4px;top:790.4px;width:964px;height:16.4px;background:#444;border:1px solid #606060;border-top:1.6px solid #1e1e1e;border-left:1.6px solid #1e1e1e"></div>
<div class="t" style="left:87.2px;top:774.6px;font-size:9.2px;color:#dadada;transform:scaleX(0.878);transform-origin:0 0;">None Selected</div>
<div class="t" style="left:87.2px;top:793.8px;font-size:9.2px;color:#dadada;transform:scaleX(0.906);transform-origin:0 0;">Click and drag to select and move objects</div>
<div class="abs" style="left:80px;top:788.4px;width:1068px;height:1.6px;background:#2e2e2e"></div>
<div class="t" style="left:876.0px;top:774.7px;font-size:8.6px;color:#cfcfcf;transform:scaleX(0.849);transform-origin:0 0;font-weight:bold;">X:</div>
<div class="abs" style="left:884.0px;top:770.6px;width:44.6px;height:15.8px;background:#575757;border:1px solid #606060;border-top:1.6px solid #1e1e1e;border-left:1.6px solid #1e1e1e"></div>
<div class="t" style="left:939.8px;top:774.7px;font-size:8.6px;color:#cfcfcf;transform:scaleX(0.917);transform-origin:0 0;font-weight:bold;">Y:</div>
<div class="abs" style="left:947.8px;top:770.6px;width:44.6px;height:15.8px;background:#575757;border:1px solid #606060;border-top:1.6px solid #1e1e1e;border-left:1.6px solid #1e1e1e"></div>
<div class="t" style="left:1003.6px;top:774.7px;font-size:8.6px;color:#cfcfcf;transform:scaleX(0.899);transform-origin:0 0;font-weight:bold;">Z:</div>
<div class="abs" style="left:1011.6px;top:770.6px;width:44.6px;height:15.8px;background:#575757;border:1px solid #606060;border-top:1.6px solid #1e1e1e;border-left:1.6px solid #1e1e1e"></div>
<div class="abs" style="left:1067.2px;top:770.4px;width:77px;height:17.2px;background:#444;border:1px solid #606060;border-top:1.6px solid #1e1e1e;border-left:1.6px solid #1e1e1e"></div>
<div class="abs" style="left:1067.2px;top:790.4px;width:77px;height:16.4px;background:#444;border:1px solid #606060;border-top:1.6px solid #1e1e1e;border-left:1.6px solid #1e1e1e"></div>
<div class="t" style="left:1071.6px;top:774.8px;font-size:8.8px;color:#dadada;transform:scaleX(0.934);transform-origin:0 0;">Grid = 10,0mm</div>
<div class="t" style="left:1071.6px;top:794.1px;font-size:8.8px;color:#dadada;transform:scaleX(0.943);transform-origin:0 0;">Add Time Tag</div>
<div class="abs" style="left:1148px;top:769.8px;width:32.6px;height:33.4px;background:#444;border:1px solid #262626;border-top-color:#5e5e5e;border-left-color:#5a5a5a"></div>
<div class="abs" style="left:1183.6px;top:770.6px;width:36.4px;height:15.6px;background:#444;border:1px solid #262626;border-top-color:#5e5e5e;border-left-color:#5a5a5a"></div>
<div class="abs" style="left:1183.6px;top:787.6px;width:36.4px;height:15.8px;background:#444;border:1px solid #262626;border-top-color:#5e5e5e;border-left-color:#5a5a5a"></div>
<div class="t" style="left:1185.6px;top:774.8px;font-size:9px;color:#dadada;transform:scaleX(0.898);transform-origin:0 0;">Auto Key</div>
<div class="t" style="left:1187.8px;top:791.5px;font-size:9px;color:#dadada;transform:scaleX(0.895);transform-origin:0 0;">Set Key</div>
<div class="abs" style="left:1223.6px;top:770.2px;width:88.4px;height:15.4px;background:#161616"></div>
<div class="abs" style="left:1225px;top:771.6px;width:85.8px;height:12.6px;background:linear-gradient(#fdfdfd,#ececec)"></div>
<div class="t" style="left:1226.2px;top:773.7px;font-size:9.2px;color:#0a0a0a;transform:scaleX(0.860);transform-origin:0 0;">Selected</div>
<svg style="left:1301.6px;top:774.6px" width="10" height="7" viewBox="0 0 10 7"><path d="M1 1.2 L4.4 4.8 L7.8 1.2" fill="none" stroke="#333" stroke-width="1.1"/></svg>
<div class="abs" style="left:1243.8px;top:787.6px;width:68.4px;height:15.8px;background:#444;border:1px solid #262626;border-top-color:#5e5e5e;border-left-color:#5a5a5a"></div>
<div class="t" style="left:1253.6px;top:791.5px;font-size:9px;color:#dadada;transform:scaleX(0.960);transform-origin:0 0;">Key Filters...</div>
<div class="abs" style="left:1337px;top:788px;width:48.6px;height:14.6px;background:#595959;border:1px solid #606060;border-top:1.6px solid #1e1e1e;border-left:1.6px solid #1e1e1e"></div>
<div class="t" style="left:1340.4px;top:791.2px;font-size:8.6px;color:#d4d4d4;">0</div>
<svg style="left:0px;top:768px" width="1488" height="38" viewBox="0 768 1488 38"><defs><radialGradient id="blb" cx="0.4" cy="0.35" r="0.7"><stop offset="0" stop-color="#fff"/><stop offset="1" stop-color="#9a9a9a"/></radialGradient></defs><path d="M822 772.8 Q826.2 772.8 826.2 776.8 Q826.2 778.6 824.4 780.2 L824 782 L820 782 L819.6 780.2 Q817.8 778.6 817.8 776.8 Q817.8 772.8 822 772.8Z" fill="url(#blb)"/><rect x="820.4" y="782" width="3.2" height="1.6" fill="#a8a8a8"/><path d="M840.6 778 L840.6 776.2 Q840.6 773.6 842.8 773.6 Q845 773.6 845 776.2 L845 778" fill="none" stroke="#ececec" stroke-width="1.3"/><rect x="838.8" y="777.8" width="8" height="5.4" fill="#ececec"/><rect x="842.2" y="779.4" width="1.2" height="2.4" fill="#444"/><rect x="858.8" y="772.6" width="10.4" height="10.6" fill="#f6f6f6"/><circle cx="864" cy="777.9" r="3" fill="none" stroke="#333" stroke-width="1.3"/><path d="M859.2 773 L861.8 775.6 M868.8 773 L866.2 775.6 M859.2 782.8 L861.8 780.2 M868.8 782.8 L866.2 780.2" stroke="#333" stroke-width="1.2"/><rect x="1048.6" y="790" width="16" height="15.4" fill="#1a1a1a"/><rect x="1049.6" y="791" width="14" height="13.4" fill="#3d83db"/><rect x="1052" y="795.8" width="7.2" height="6.4" fill="#f4f4f4" stroke="#1c3c78" stroke-width="0.6"/><path d="M1054.2 795.6 L1054.2 793.6 L1061.6 793.6 L1061.6 800 L1059.4 800" fill="none" stroke="#f4f4f4" stroke-width="1.1"/><circle cx="1158.6" cy="786.6" r="3.2" fill="none" stroke="#0e0e0e" stroke-width="1.6"/><path d="M1161.8 786.6 L1172.6 786.6 M1167.4 786.6 L1167.4 789.8 M1170.2 786.6 L1170.2 790.6" stroke="#0e0e0e" stroke-width="1.6" fill="none"/><path d="M1226.4 795.4 L1229.6 801.6 L1233 791.4 Q1234.4 789.6 1236 793 L1237.4 798" fill="none" stroke="#c83a5a" stroke-width="1.1"/><path d="M1235.4 802.8000000000001 L1239.2 799.0 L1239.2 802.8000000000001Z" fill="#f8f8f8" stroke="#161616" stroke-width="0.6"/><rect x="1318.8" y="773.5999999999999" width="1.7" height="8.4" fill="#ececec"/><path d="M1326 774.3 L1321 777.8 L1326 781.3Z" fill="none" stroke="#ececec" stroke-width="1.1"/><path d="M1331.6 774.3 L1326.6 777.8 L1331.6 781.3Z" fill="none" stroke="#ececec" stroke-width="1.1"/><path d="M1343.8 774.3 L1339.2 777.8 L1343.8 781.3Z" fill="none" stroke="#ececec" stroke-width="1.1"/><rect x="1344.8" y="774.0" width="1.7" height="7.6" fill="#ececec"/><rect x="1347.4" y="774.0" width="1.7" height="7.6" fill="#ececec"/><rect x="1350" y="774.0" width="1.7" height="7.6" fill="#ececec"/><path d="M1359.6 773.8 L1366.6 777.8 L1359.6 781.8Z" fill="none" stroke="#ececec" stroke-width="1.1"/><path d="M1367.4 784.8000000000001 L1371.2 781.0 L1371.2 784.8000000000001Z" fill="#f8f8f8" stroke="#161616" stroke-width="0.6"/><rect x="1375" y="774.0" width="1.7" height="7.6" fill="#ececec"/><rect x="1377.6" y="774.0" width="1.7" height="7.6" fill="#ececec"/><path d="M1380.6 774.3 L1387.0 777.8 L1380.6 781.3Z" fill="none" stroke="#ececec" stroke-width="1.1"/><path d="M1395 774.3 L1400 777.8 L1395 781.3Z" fill="none" stroke="#ececec" stroke-width="1.1"/><path d="M1400.4 774.3 L1405.4 777.8 L1400.4 781.3Z" fill="none" stroke="#ececec" stroke-width="1.1"/><rect x="1405.8" y="773.5999999999999" width="1.7" height="8.4" fill="#ececec"/><rect x="1334.6000000000001" y="771.4" width="1.2" height="13" fill="#242424"/><rect x="1391.0" y="771.4" width="1.2" height="13" fill="#242424"/><rect x="1413.0" y="771.4" width="1.2" height="13" fill="#242424"/><rect x="1413" y="789" width="1.2" height="13" fill="#242424"/><rect x="1318.8" y="791.6" width="1.4" height="7.6" fill="#ececec"/><path d="M1325.0 792.6 L1320.8 795.4 L1325.0 798.1999999999999Z" fill="#ececec"/><path d="M1326 792.6 L1330.2 795.4 L1326 798.1999999999999Z" fill="#ececec"/><rect x="1330.8" y="791.6" width="1.4" height="7.6" fill="#ececec"/><path d="M1389.2 793.6 L1391.4 791 L1393.6 793.6Z M1389.2 797.4 L1391.4 800 L1393.6 797.4Z" fill="#ececec"/><rect x="1388" y="789" width="6.8" height="13" fill="none" stroke="#2a2a2a" stroke-width="0.8"/><rect x="1400.6" y="789.6" width="9.4" height="10.6" fill="#e8e8f0"/><rect x="1401.6" y="790.6" width="4.4" height="4" fill="#2a50b0"/><rect x="1401.6" y="795.8" width="3" height="3.4" fill="#5a80d0"/><rect x="1406.8" y="790.6" width="2.4" height="2" fill="#8a8aa0"/><circle cx="1409" cy="798.4" r="3.4" fill="#f4f4f4" stroke="#333" stroke-width="0.7"/><path d="M1409 796.4 L1409 798.6 L1410.6 799.4" stroke="#222" stroke-width="0.8" fill="none"/><defs><radialGradient id="zg" cx="0.4" cy="0.35" r="0.7"><stop offset="0" stop-color="#fff"/><stop offset="1" stop-color="#a0a0a0"/></radialGradient></defs><circle cx="1421.8" cy="776.8" r="3.8" fill="url(#zg)"/><path d="M1424.4 779.8 L1427.6 783" stroke="#c8c8c8" stroke-width="1.8"/><path d="M1427.4 773.4 L1430.4 773.4 M1428.9 771.9 L1428.9 774.9 M1427.4 777.6 L1430.4 777.6" stroke="#ececec" stroke-width="1"/><g fill="#ececec"><rect x="1436.6" y="772.6" width="4" height="3.6"/><rect x="1441.8" y="772.6" width="4" height="3.6"/><rect x="1436.6" y="777.4" width="4" height="3.6"/></g><circle cx="1443.6" cy="779.4" r="2" fill="none" stroke="#ececec" stroke-width="0.9"/><path d="M1445 780.8 L1446.8 782.6" stroke="#ececec" stroke-width="1"/><path d="M1444.0 784.6 L1447.8 780.8 L1447.8 784.6Z" fill="#f8f8f8" stroke="#161616" stroke-width="0.6"/><path d="M1453.4 774.6 L1453.4 772.2 L1456 772.2 M1463.6 772.2 L1466.2 772.2 L1466.2 774.6 M1453.4 780.6 L1453.4 783 L1456 783 M1463.6 783 L1466.2 783 L1466.2 780.6" fill="none" stroke="#ececec" stroke-width="1"/><path d="M1456 776 L1458 774.2 L1463.4 774.2 L1463.4 779.4 L1461.4 781.2 L1456 781.2Z" fill="#8aa860"/><path d="M1456 776 L1458 774.2 L1463.4 774.2 L1461.4 776Z" fill="#b8d088"/><path d="M1464.0 784.8000000000001 L1467.8 781.0 L1467.8 784.8000000000001Z" fill="#f8f8f8" stroke="#161616" stroke-width="0.6"/><g fill="#ececec"><rect x="1476.6" y="772" width="3.6" height="3.4"/><rect x="1481" y="772" width="3.6" height="3.4"/><rect x="1481" y="776.4" width="3.6" height="3.4"/></g><rect x="1472.2" y="774.4" width="4.6" height="4.2" fill="#8aa860"/><rect x="1472.2" y="779.4" width="4.6" height="3.6" fill="#7a9850"/><rect x="1477.4" y="779.4" width="3" height="3.6" fill="#a8c078"/><path d="M1481.8000000000002 784.8000000000001 L1485.6000000000001 781.0 L1485.6000000000001 784.8000000000001Z" fill="#f8f8f8" stroke="#161616" stroke-width="0.6"/><path d="M1418 789.6 L1430 795.4 L1418 801.6" fill="none" stroke="#ececec" stroke-width="1"/><path d="M1420.4 791.4 Q1423.4 795.4 1420.4 799.8" fill="none" stroke="#ececec" stroke-width="0.8"/><path d="M1427.8000000000002 803.0 L1431.6000000000001 799.1999999999999 L1431.6000000000001 803.0Z" fill="#f8f8f8" stroke="#161616" stroke-width="0.6"/><g fill="#ececec"><ellipse cx="1438.6" cy="794.4" rx="1.9" ry="3.6"/><rect x="1437.2" y="799" width="2.8" height="1.8" rx="0.8"/><ellipse cx="1444.2" cy="793.2" rx="1.9" ry="3.6"/><rect x="1442.8" y="797.8" width="2.8" height="1.8" rx="0.8"/></g><path d="M1445.0 803.0 L1448.8 799.1999999999999 L1448.8 803.0Z" fill="#f8f8f8" stroke="#161616" stroke-width="0.6"/><path d="M1455.2 799.4 Q1455.6 791.6 1461.4 790.4" fill="none" stroke="#ececec" stroke-width="1" stroke-dasharray="1.4 1"/><path d="M1455 799.6 L1465 799.6" stroke="#ececec" stroke-width="0.9" stroke-dasharray="1.4 1"/><circle cx="1461" cy="795.4" r="2.6" fill="#f0e890"/><path d="M1458.6 796.6 Q1461 799 1463.4 796.6Z" fill="#5a9a4a"/><path d="M1463.4 803.0 L1467.2 799.1999999999999 L1467.2 803.0Z" fill="#f8f8f8" stroke="#161616" stroke-width="0.6"/><rect x="1472.6" y="790" width="8.6" height="8.4" fill="none" stroke="#ececec" stroke-width="1.5"/><path d="M1474.6 792 L1478.4 795.8" stroke="#ececec" stroke-width="1.2"/><path d="M1474 791.4 L1477.4 791.8 L1474.4 794.8Z" fill="#ececec"/><rect x="1478.6" y="796.4" width="3.6" height="3.6" fill="#444" stroke="#ececec" stroke-width="0.8"/></svg>
<!-- END:STATUS -->
<!-- SECTION:TASKBAR -->
<div class="abs" style="left:0px;top:806px;width:1488px;height:31px;background:#04060b"></div>
<div class="abs" style="left:228px;top:806px;width:36.4px;height:31px;background:#33373c"></div>
<div class="abs" style="left:155px;top:835.4px;width:31px;height:1.6px;background:#9acbec"></div>
<div class="abs" style="left:193.5px;top:835.4px;width:31.5px;height:1.6px;background:#9acbec"></div>
<div class="abs" style="left:228px;top:835.4px;width:36.39999999999998px;height:1.6px;background:#9acbec"></div>
<svg style="left:0px;top:806px" width="1488" height="31" viewBox="0 806 1488 31"><g fill="#ffffff"><path d="M11.8 816.8 L17.4 816 L17.4 821 L11.8 821Z"/><path d="M18.4 815.8 L25.4 814.8 L25.4 821 L18.4 821Z"/><path d="M11.8 822 L17.4 822 L17.4 827 L11.8 826.2Z"/><path d="M18.4 822 L25.4 822 L25.4 828.2 L18.4 827.2Z"/></g><circle cx="57.6" cy="819.4" r="4" fill="none" stroke="#ffffff" stroke-width="1.3"/><path d="M54.8 822.4 L49.8 827.6" stroke="#ffffff" stroke-width="1.5"/><rect x="88.6" y="816.6" width="9" height="10" fill="none" stroke="#ffffff" stroke-width="1.3"/><path d="M86.6 818.2 L85.4 818.2 L85.4 825 L86.6 825 M99.6 818.2 L100.8 818.2 L100.8 825 L99.6 825" fill="none" stroke="#ffffff" stroke-width="1.1"/><path d="M124.4 815 L130.4 815 L131.6 816.6 L140.6 816.6 L140.6 827.6 L124.4 827.6Z" fill="#f4d272"/><rect x="124.4" y="818.6" width="16.2" height="9" fill="#f8dc8a"/><path d="M127.6 827.6 L127.6 822.6 L137.4 822.6 L137.4 827.6Z" fill="#58b0e0"/><rect x="130" y="825" width="5" height="2.6" fill="#f8dc8a"/><circle cx="169.4" cy="820.6" r="7.6" fill="#10a8e8"/><circle cx="164.4" cy="816" r="3.4" fill="#10a8e8"/><circle cx="174.4" cy="825.4" r="3.4" fill="#10a8e8"/><circle cx="177.4" cy="827.2" r="3.1" fill="#f0a020"/><circle cx="208.4" cy="821.2" r="8.4" fill="#e8453a"/><path d="M208.4 821.2 L201.2 817 A8.4 8.4 0 0 0 204.4 828.6 L208.6 821.4Z" fill="#2da84f"/><path d="M208.4 821.2 L204.2 828.5 A8.4 8.4 0 0 0 216.8 821.2 A8.4 8.4 0 0 0 215.6 817 L208.4 817Z" fill="#fbc116"/><path d="M208.4 821.2 L204.3 828.5 A8.4 8.4 0 0 1 201 817.2Z" fill="#2da84f"/><circle cx="208.4" cy="821.2" r="3.9" fill="#f4f4f4"/><circle cx="208.4" cy="821.2" r="3.1" fill="#4a8af4"/><defs><linearGradient id="mx" x1="0" y1="0" x2="1" y2="1"><stop offset="0" stop-color="#2a8a80"/><stop offset="0.5" stop-color="#d8e8e8"/><stop offset="1" stop-color="#1a7a70"/></linearGradient></defs><rect x="236.8" y="811.6" width="19.2" height="18.8" fill="url(#mx)"/><path d="M241.4 813.6 L247.6 813.6 L252.6 819.6 L248.6 826 L241.6 826 L240.8 823.8 L244.4 822 L241 820.2 L241.8 818.6 L244.4 817.6 L240.8 815.6Z" fill="#0c7868"/><path d="M244.4 817.6 L250 815.6 L250.6 816.4 L245.2 818.6Z M244.4 822 L250.8 821 L250.4 822 L245.2 823.2Z" fill="#064c42"/><rect x="243" y="826.4" width="9" height="3" fill="#1a8a7a"/><circle cx="1296" cy="817.8" r="2.2" fill="none" stroke="#ffffff" stroke-width="1.1"/><path d="M1292.6 824 Q1292.8 820.6 1296 820.6 Q1299.2 820.6 1299.4 824" fill="none" stroke="#ffffff" stroke-width="1.1"/><circle cx="1291.4" cy="821.4" r="1.9" fill="#04060b" stroke="#ffffff" stroke-width="1.1"/><path d="M1288 827.4 Q1288.2 824 1291.4 824 Q1294.6 824 1294.8 827.4" fill="#04060b" stroke="#ffffff" stroke-width="1.1"/><path d="M1316.8 823.6 L1321.5 818.9 L1326.2 823.6" fill="none" stroke="#ffffff" stroke-width="1.3"/><rect x="1336" y="817.4" width="10" height="7" fill="none" stroke="#ffffff" stroke-width="1.1"/><path d="M1341 824.4 L1341 826.6 M1337.6 826.8 L1344.4 826.8" stroke="#ffffff" stroke-width="1.1"/><rect x="1333.8" y="816.8" width="3.4" height="3" fill="#04060b" stroke="#ffffff" stroke-width="0.8"/><path d="M1352.4 819.6 L1354.6 819.6 L1357.6 816.8 L1357.6 826.4 L1354.6 823.6 L1352.4 823.6Z" fill="none" stroke="#ffffff" stroke-width="1"/><path d="M1359.6 819.4 Q1361 821.6 1359.6 823.8" fill="none" stroke="#ffffff" stroke-width="0.9"/><path d="M1361.4 817.8 Q1363.6 821.6 1361.4 825.4" fill="none" stroke="#c0c0c0" stroke-width="0.8"/><path d="M1363.2 816.4 Q1366 821.6 1363.2 826.8" fill="none" stroke="#808080" stroke-width="0.7"/><path d="M1456.6 815.8 L1468.4 815.8 L1468.4 824.6 L1460.4 824.6 L1457.6 827.4 L1457.6 824.6 L1456.6 824.6Z" fill="#ffffff"/><path d="M1458.6 818.2 L1466.4 818.2 M1458.6 820.2 L1466.4 820.2 M1458.6 822.2 L1464 822.2" stroke="#04060b" stroke-width="0.8"/><circle cx="1468.2" cy="827.4" r="5.2" fill="#1a1c20" stroke="#e8e8e8" stroke-width="1"/><rect x="1485" y="806" width="0.9" height="31" fill="#4a4c50"/></svg>
<div class="t" style="left:166.4px;top:815.2px;font-size:11.5px;color:#fff;font-weight:bold;">S</div>
<div class="t" style="left:176.2px;top:824.7px;font-size:5.4px;color:#111;font-weight:bold;">1</div>
<div class="t" style="left:1465.8px;top:823.8px;font-size:7.6px;color:#fff;font-weight:bold;">2</div>
<div class="t" style="left:1374.0px;top:816.3px;font-size:10.2px;color:#fff;transform:scaleX(0.803);transform-origin:0 0;">РУС</div>
<div class="t" style="left:1411.0px;top:809.6px;font-size:9.7px;color:#fff;transform:scaleX(0.853);transform-origin:0 0;">11:27</div>
<div class="t" style="left:1400.7px;top:823.4px;font-size:9.7px;color:#fff;transform:scaleX(0.845);transform-origin:0 0;">28.12.2017</div>
<!-- END:TASKBAR -->
</body>
</html>
